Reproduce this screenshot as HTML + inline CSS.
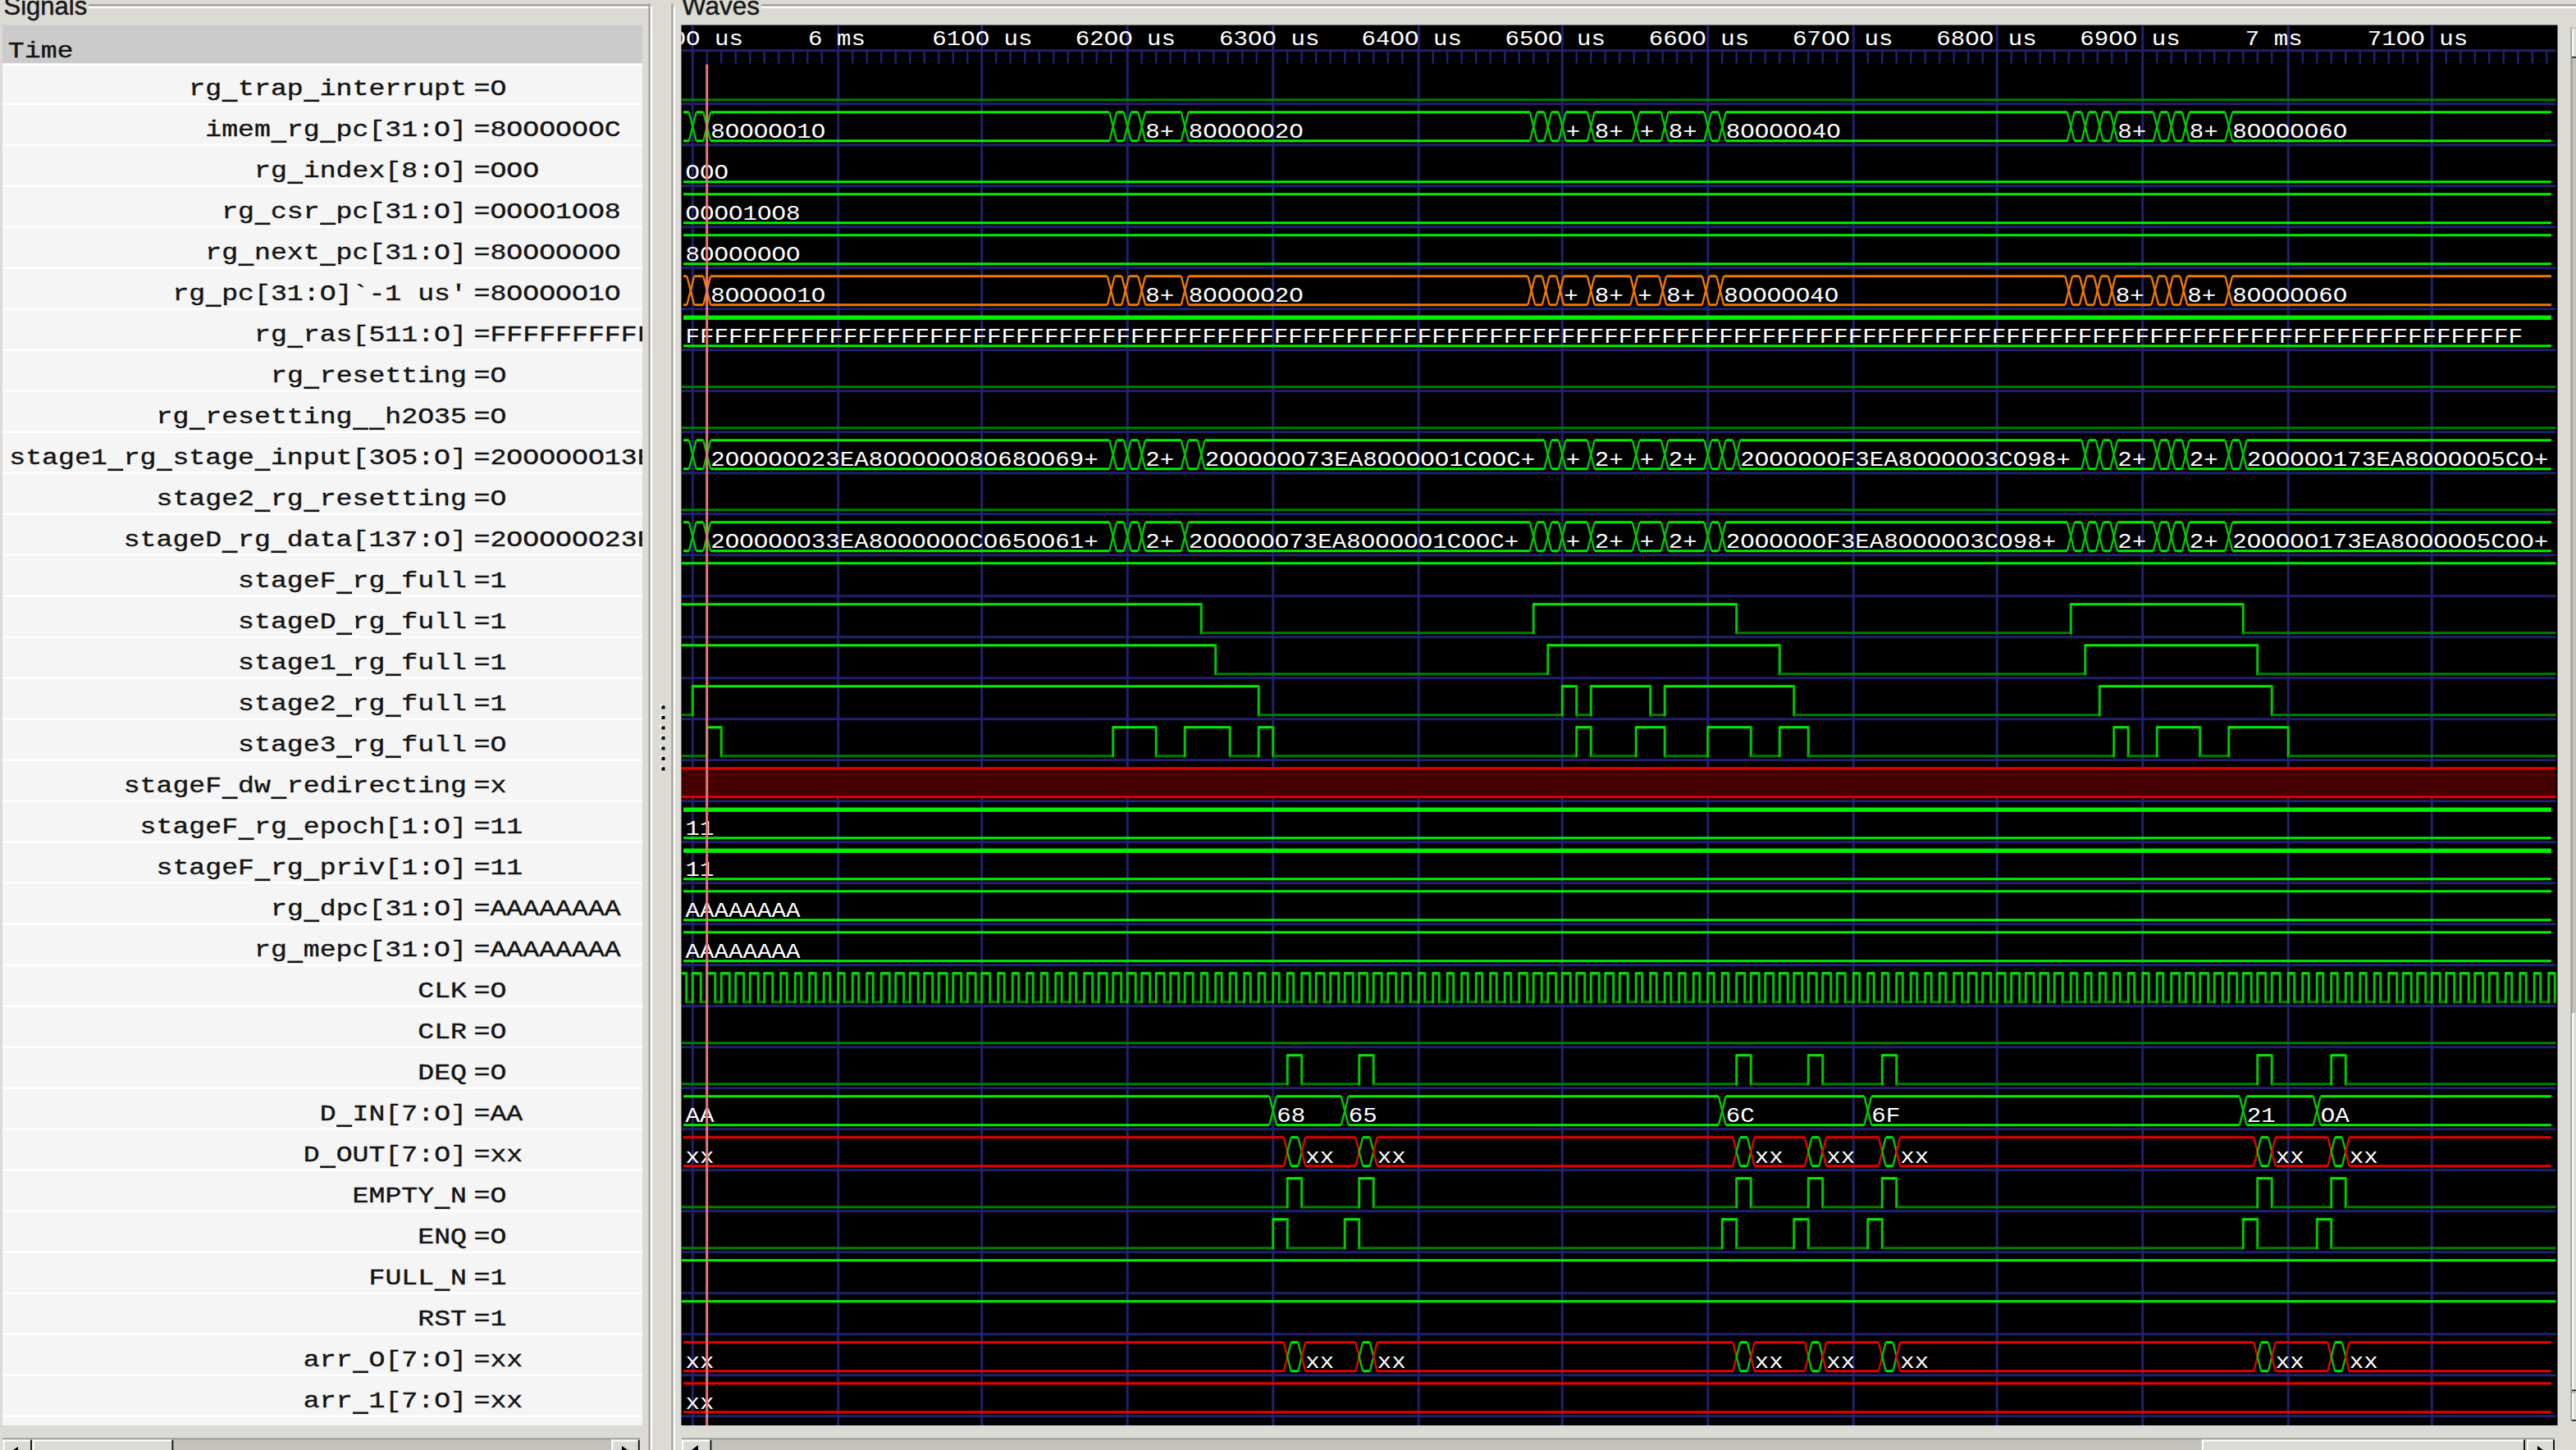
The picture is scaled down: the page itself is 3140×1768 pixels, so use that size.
<!DOCTYPE html>
<html><head><meta charset="utf-8"><title>GTKWave</title>
<style>html,body{margin:0;padding:0;background:#dcdad5;overflow:hidden}svg{display:block}</style>
</head><body>
<svg width="3140" height="1768" viewBox="0 0 3140 1768">
<rect x="0" y="0" width="3140" height="1768" fill="#dcdad5"/>
<rect x="108" y="5.2" width="684.5" height="2" fill="#9c9a93"/>
<rect x="108" y="8" width="687" height="2" fill="#ffffff"/>
<rect x="790.5" y="4.5" width="2" height="1768" fill="#9c9a93"/>
<rect x="793" y="8" width="2.2" height="1768" fill="#ffffff"/>
<rect x="928" y="5.2" width="2212" height="2" fill="#9c9a93"/>
<rect x="928" y="8" width="2212" height="2" fill="#ffffff"/>
<rect x="818.4" y="4.5" width="2" height="1768" fill="#9c9a93"/>
<rect x="820.8" y="8" width="2" height="1768" fill="#ffffff"/>
<text x="4.5" y="18" font-family="Liberation Sans, sans-serif" font-size="31" fill="#1a1a1a" stroke="#1a1a1a" stroke-width="0.5">Signals</text>
<text x="831" y="18" font-family="Liberation Sans, sans-serif" font-size="31.5" fill="#1a1a1a" stroke="#1a1a1a" stroke-width="0.5">Waves</text>
<rect x="3" y="30.3" width="780" height="1707.7" fill="#f5f5f5"/>
<rect x="3" y="30.3" width="780" height="47.1" fill="#cbcbcb"/>
<rect x="3" y="77.4" width="780" height="2.5" fill="#ffffff"/>
<rect x="3" y="125.5" width="780" height="2.5" fill="#ffffff"/>
<rect x="3" y="175.5" width="780" height="2.5" fill="#ffffff"/>
<rect x="3" y="225.5" width="780" height="2.5" fill="#ffffff"/>
<rect x="3" y="275.5" width="780" height="2.5" fill="#ffffff"/>
<rect x="3" y="325.5" width="780" height="2.5" fill="#ffffff"/>
<rect x="3" y="375.5" width="780" height="2.5" fill="#ffffff"/>
<rect x="3" y="425.5" width="780" height="2.5" fill="#ffffff"/>
<rect x="3" y="475.5" width="780" height="2.5" fill="#ffffff"/>
<rect x="3" y="525.5" width="780" height="2.5" fill="#ffffff"/>
<rect x="3" y="575.5" width="780" height="2.5" fill="#ffffff"/>
<rect x="3" y="625.5" width="780" height="2.5" fill="#ffffff"/>
<rect x="3" y="675.5" width="780" height="2.5" fill="#ffffff"/>
<rect x="3" y="725.5" width="780" height="2.5" fill="#ffffff"/>
<rect x="3" y="775.5" width="780" height="2.5" fill="#ffffff"/>
<rect x="3" y="825.5" width="780" height="2.5" fill="#ffffff"/>
<rect x="3" y="875.5" width="780" height="2.5" fill="#ffffff"/>
<rect x="3" y="925.5" width="780" height="2.5" fill="#ffffff"/>
<rect x="3" y="975.5" width="780" height="2.5" fill="#ffffff"/>
<rect x="3" y="1025.5" width="780" height="2.5" fill="#ffffff"/>
<rect x="3" y="1075.5" width="780" height="2.5" fill="#ffffff"/>
<rect x="3" y="1125.5" width="780" height="2.5" fill="#ffffff"/>
<rect x="3" y="1175.5" width="780" height="2.5" fill="#ffffff"/>
<rect x="3" y="1225.5" width="780" height="2.5" fill="#ffffff"/>
<rect x="3" y="1275.5" width="780" height="2.5" fill="#ffffff"/>
<rect x="3" y="1325.5" width="780" height="2.5" fill="#ffffff"/>
<rect x="3" y="1375.5" width="780" height="2.5" fill="#ffffff"/>
<rect x="3" y="1425.5" width="780" height="2.5" fill="#ffffff"/>
<rect x="3" y="1475.5" width="780" height="2.5" fill="#ffffff"/>
<rect x="3" y="1525.5" width="780" height="2.5" fill="#ffffff"/>
<rect x="3" y="1575.5" width="780" height="2.5" fill="#ffffff"/>
<rect x="3" y="1625.5" width="780" height="2.5" fill="#ffffff"/>
<rect x="3" y="1675.5" width="780" height="2.5" fill="#ffffff"/>
<rect x="3" y="1725.5" width="780" height="2.5" fill="#ffffff"/>
<defs><clipPath id="lc"><rect x="3" y="30" width="780" height="1708"/></clipPath><clipPath id="wc"><rect x="830.5" y="30.5" width="2287" height="1707.5"/></clipPath></defs>
<g clip-path="url(#lc)" font-family="Liberation Mono, monospace" fill="#141414" stroke="#141414" stroke-width="0.45">
<text transform="translate(9.8,70) scale(1,0.86)" font-size="33.2">Time</text>
<text transform="translate(230.36,115.5) scale(1,0.86)" font-size="33.2" xml:space="preserve">rg trap interrupt</text>
<rect x="270.70" y="121.5" width="18.92" height="2.6" stroke="none"/>
<rect x="370.30" y="121.5" width="18.92" height="2.6" stroke="none"/>
<text transform="translate(577.5,115.5) scale(1,0.86)" font-size="33.2">=O</text>
<text transform="translate(250.28,165.5) scale(1,0.86)" font-size="33.2" xml:space="preserve">imem rg pc[31:O]</text>
<rect x="330.46" y="171.5" width="18.92" height="2.6" stroke="none"/>
<rect x="390.22" y="171.5" width="18.92" height="2.6" stroke="none"/>
<text transform="translate(577.5,165.5) scale(1,0.86)" font-size="33.2">=8OOOOOOC</text>
<text transform="translate(310.04,215.5) scale(1,0.86)" font-size="33.2" xml:space="preserve">rg index[8:O]</text>
<rect x="350.38" y="221.5" width="18.92" height="2.6" stroke="none"/>
<text transform="translate(577.5,215.5) scale(1,0.86)" font-size="33.2">=OOO</text>
<text transform="translate(270.20,265.5) scale(1,0.86)" font-size="33.2" xml:space="preserve">rg csr pc[31:O]</text>
<rect x="310.54" y="271.5" width="18.92" height="2.6" stroke="none"/>
<rect x="390.22" y="271.5" width="18.92" height="2.6" stroke="none"/>
<text transform="translate(577.5,265.5) scale(1,0.86)" font-size="33.2">=OOOO1OO8</text>
<text transform="translate(250.28,315.5) scale(1,0.86)" font-size="33.2" xml:space="preserve">rg next pc[31:O]</text>
<rect x="290.62" y="321.5" width="18.92" height="2.6" stroke="none"/>
<rect x="390.22" y="321.5" width="18.92" height="2.6" stroke="none"/>
<text transform="translate(577.5,315.5) scale(1,0.86)" font-size="33.2">=8OOOOOOO</text>
<text transform="translate(210.44,365.5) scale(1,0.86)" font-size="33.2" xml:space="preserve">rg pc[31:O]`-1 us&#x27;</text>
<rect x="250.78" y="371.5" width="18.92" height="2.6" stroke="none"/>
<text transform="translate(577.5,365.5) scale(1,0.86)" font-size="33.2">=8OOOOO1O</text>
<text transform="translate(310.04,415.5) scale(1,0.86)" font-size="33.2" xml:space="preserve">rg ras[511:O]</text>
<rect x="350.38" y="421.5" width="18.92" height="2.6" stroke="none"/>
<text transform="translate(577.5,415.5) scale(1,0.86)" font-size="33.2">=FFFFFFFFFFFF</text>
<text transform="translate(329.96,465.5) scale(1,0.86)" font-size="33.2" xml:space="preserve">rg resetting</text>
<rect x="370.30" y="471.5" width="18.92" height="2.6" stroke="none"/>
<text transform="translate(577.5,465.5) scale(1,0.86)" font-size="33.2">=O</text>
<text transform="translate(190.52,515.5) scale(1,0.86)" font-size="33.2" xml:space="preserve">rg resetting  h2O35</text>
<rect x="230.86" y="521.5" width="18.92" height="2.6" stroke="none"/>
<rect x="430.06" y="521.5" width="18.92" height="2.6" stroke="none"/>
<rect x="449.98" y="521.5" width="18.92" height="2.6" stroke="none"/>
<text transform="translate(577.5,515.5) scale(1,0.86)" font-size="33.2">=O</text>
<text transform="translate(11.24,565.5) scale(1,0.86)" font-size="33.2" xml:space="preserve">stage1 rg stage input[3O5:O]</text>
<rect x="131.26" y="571.5" width="18.92" height="2.6" stroke="none"/>
<rect x="191.02" y="571.5" width="18.92" height="2.6" stroke="none"/>
<rect x="310.54" y="571.5" width="18.92" height="2.6" stroke="none"/>
<text transform="translate(577.5,565.5) scale(1,0.86)" font-size="33.2">=2OOOOOO13EA8</text>
<text transform="translate(190.52,615.5) scale(1,0.86)" font-size="33.2" xml:space="preserve">stage2 rg resetting</text>
<rect x="310.54" y="621.5" width="18.92" height="2.6" stroke="none"/>
<rect x="370.30" y="621.5" width="18.92" height="2.6" stroke="none"/>
<text transform="translate(577.5,615.5) scale(1,0.86)" font-size="33.2">=O</text>
<text transform="translate(150.68,665.5) scale(1,0.86)" font-size="33.2" xml:space="preserve">stageD rg data[137:O]</text>
<rect x="270.70" y="671.5" width="18.92" height="2.6" stroke="none"/>
<rect x="330.46" y="671.5" width="18.92" height="2.6" stroke="none"/>
<text transform="translate(577.5,665.5) scale(1,0.86)" font-size="33.2">=2OOOOOO23EA8</text>
<text transform="translate(290.12,715.5) scale(1,0.86)" font-size="33.2" xml:space="preserve">stageF rg full</text>
<rect x="410.14" y="721.5" width="18.92" height="2.6" stroke="none"/>
<rect x="469.90" y="721.5" width="18.92" height="2.6" stroke="none"/>
<text transform="translate(577.5,715.5) scale(1,0.86)" font-size="33.2">=1</text>
<text transform="translate(290.12,765.5) scale(1,0.86)" font-size="33.2" xml:space="preserve">stageD rg full</text>
<rect x="410.14" y="771.5" width="18.92" height="2.6" stroke="none"/>
<rect x="469.90" y="771.5" width="18.92" height="2.6" stroke="none"/>
<text transform="translate(577.5,765.5) scale(1,0.86)" font-size="33.2">=1</text>
<text transform="translate(290.12,815.5) scale(1,0.86)" font-size="33.2" xml:space="preserve">stage1 rg full</text>
<rect x="410.14" y="821.5" width="18.92" height="2.6" stroke="none"/>
<rect x="469.90" y="821.5" width="18.92" height="2.6" stroke="none"/>
<text transform="translate(577.5,815.5) scale(1,0.86)" font-size="33.2">=1</text>
<text transform="translate(290.12,865.5) scale(1,0.86)" font-size="33.2" xml:space="preserve">stage2 rg full</text>
<rect x="410.14" y="871.5" width="18.92" height="2.6" stroke="none"/>
<rect x="469.90" y="871.5" width="18.92" height="2.6" stroke="none"/>
<text transform="translate(577.5,865.5) scale(1,0.86)" font-size="33.2">=1</text>
<text transform="translate(290.12,915.5) scale(1,0.86)" font-size="33.2" xml:space="preserve">stage3 rg full</text>
<rect x="410.14" y="921.5" width="18.92" height="2.6" stroke="none"/>
<rect x="469.90" y="921.5" width="18.92" height="2.6" stroke="none"/>
<text transform="translate(577.5,915.5) scale(1,0.86)" font-size="33.2">=O</text>
<text transform="translate(150.68,965.5) scale(1,0.86)" font-size="33.2" xml:space="preserve">stageF dw redirecting</text>
<rect x="270.70" y="971.5" width="18.92" height="2.6" stroke="none"/>
<rect x="330.46" y="971.5" width="18.92" height="2.6" stroke="none"/>
<text transform="translate(577.5,965.5) scale(1,0.86)" font-size="33.2">=x</text>
<text transform="translate(170.60,1015.5) scale(1,0.86)" font-size="33.2" xml:space="preserve">stageF rg epoch[1:O]</text>
<rect x="290.62" y="1021.5" width="18.92" height="2.6" stroke="none"/>
<rect x="350.38" y="1021.5" width="18.92" height="2.6" stroke="none"/>
<text transform="translate(577.5,1015.5) scale(1,0.86)" font-size="33.2">=11</text>
<text transform="translate(190.52,1065.5) scale(1,0.86)" font-size="33.2" xml:space="preserve">stageF rg priv[1:O]</text>
<rect x="310.54" y="1071.5" width="18.92" height="2.6" stroke="none"/>
<rect x="370.30" y="1071.5" width="18.92" height="2.6" stroke="none"/>
<text transform="translate(577.5,1065.5) scale(1,0.86)" font-size="33.2">=11</text>
<text transform="translate(329.96,1115.5) scale(1,0.86)" font-size="33.2" xml:space="preserve">rg dpc[31:O]</text>
<rect x="370.30" y="1121.5" width="18.92" height="2.6" stroke="none"/>
<text transform="translate(577.5,1115.5) scale(1,0.86)" font-size="33.2">=AAAAAAAA</text>
<text transform="translate(310.04,1165.5) scale(1,0.86)" font-size="33.2" xml:space="preserve">rg mepc[31:O]</text>
<rect x="350.38" y="1171.5" width="18.92" height="2.6" stroke="none"/>
<text transform="translate(577.5,1165.5) scale(1,0.86)" font-size="33.2">=AAAAAAAA</text>
<text transform="translate(509.24,1215.5) scale(1,0.86)" font-size="33.2" xml:space="preserve">CLK</text>
<text transform="translate(577.5,1215.5) scale(1,0.86)" font-size="33.2">=O</text>
<text transform="translate(509.24,1265.5) scale(1,0.86)" font-size="33.2" xml:space="preserve">CLR</text>
<text transform="translate(577.5,1265.5) scale(1,0.86)" font-size="33.2">=O</text>
<text transform="translate(509.24,1315.5) scale(1,0.86)" font-size="33.2" xml:space="preserve">DEQ</text>
<text transform="translate(577.5,1315.5) scale(1,0.86)" font-size="33.2">=O</text>
<text transform="translate(389.72,1365.5) scale(1,0.86)" font-size="33.2" xml:space="preserve">D IN[7:O]</text>
<rect x="410.14" y="1371.5" width="18.92" height="2.6" stroke="none"/>
<text transform="translate(577.5,1365.5) scale(1,0.86)" font-size="33.2">=AA</text>
<text transform="translate(369.80,1415.5) scale(1,0.86)" font-size="33.2" xml:space="preserve">D OUT[7:O]</text>
<rect x="390.22" y="1421.5" width="18.92" height="2.6" stroke="none"/>
<text transform="translate(577.5,1415.5) scale(1,0.86)" font-size="33.2">=xx</text>
<text transform="translate(429.56,1465.5) scale(1,0.86)" font-size="33.2" xml:space="preserve">EMPTY N</text>
<rect x="529.66" y="1471.5" width="18.92" height="2.6" stroke="none"/>
<text transform="translate(577.5,1465.5) scale(1,0.86)" font-size="33.2">=O</text>
<text transform="translate(509.24,1515.5) scale(1,0.86)" font-size="33.2" xml:space="preserve">ENQ</text>
<text transform="translate(577.5,1515.5) scale(1,0.86)" font-size="33.2">=O</text>
<text transform="translate(449.48,1565.5) scale(1,0.86)" font-size="33.2" xml:space="preserve">FULL N</text>
<rect x="529.66" y="1571.5" width="18.92" height="2.6" stroke="none"/>
<text transform="translate(577.5,1565.5) scale(1,0.86)" font-size="33.2">=1</text>
<text transform="translate(509.24,1615.5) scale(1,0.86)" font-size="33.2" xml:space="preserve">RST</text>
<text transform="translate(577.5,1615.5) scale(1,0.86)" font-size="33.2">=1</text>
<text transform="translate(369.80,1665.5) scale(1,0.86)" font-size="33.2" xml:space="preserve">arr O[7:O]</text>
<rect x="430.06" y="1671.5" width="18.92" height="2.6" stroke="none"/>
<text transform="translate(577.5,1665.5) scale(1,0.86)" font-size="33.2">=xx</text>
<text transform="translate(369.80,1715.5) scale(1,0.86)" font-size="33.2" xml:space="preserve">arr 1[7:O]</text>
<rect x="430.06" y="1721.5" width="18.92" height="2.6" stroke="none"/>
<text transform="translate(577.5,1715.5) scale(1,0.86)" font-size="33.2">=xx</text>
</g>
<rect x="804.5" y="859.0" width="3" height="3" fill="#ffffff"/>
<rect x="806.5" y="860.5" width="4" height="4" fill="#000000"/>
<rect x="804.5" y="871.5" width="3" height="3" fill="#ffffff"/>
<rect x="806.5" y="873.0" width="4" height="4" fill="#000000"/>
<rect x="804.5" y="884.0" width="3" height="3" fill="#ffffff"/>
<rect x="806.5" y="885.5" width="4" height="4" fill="#000000"/>
<rect x="804.5" y="896.5" width="3" height="3" fill="#ffffff"/>
<rect x="806.5" y="898.0" width="4" height="4" fill="#000000"/>
<rect x="804.5" y="909.0" width="3" height="3" fill="#ffffff"/>
<rect x="806.5" y="910.5" width="4" height="4" fill="#000000"/>
<rect x="804.5" y="921.5" width="3" height="3" fill="#ffffff"/>
<rect x="806.5" y="923.0" width="4" height="4" fill="#000000"/>
<rect x="804.5" y="934.0" width="3" height="3" fill="#ffffff"/>
<rect x="806.5" y="935.5" width="4" height="4" fill="#000000"/>
<rect x="3" y="1753.5" width="777" height="14.5" fill="#c4c2bd"/>
<rect x="3" y="1753.5" width="777" height="2" fill="#9c9a93"/>
<rect x="3.5" y="1755.5" width="35.5" height="12.5" fill="#dcdad5"/>
<rect x="3.5" y="1755.5" width="35.5" height="2" fill="#ffffff"/>
<rect x="3.5" y="1755.5" width="2" height="12.5" fill="#ffffff"/>
<rect x="37" y="1755.5" width="2" height="12.5" fill="#1a1a1a"/>
<rect x="39.6" y="1755.5" width="171.8" height="12.5" fill="#dcdad5"/>
<rect x="39.6" y="1755.5" width="171.8" height="2" fill="#ffffff"/>
<rect x="39.6" y="1755.5" width="2" height="12.5" fill="#ffffff"/>
<rect x="209.4" y="1755.5" width="2" height="12.5" fill="#1a1a1a"/>
<rect x="745.3" y="1755.5" width="34.5" height="12.5" fill="#dcdad5"/>
<rect x="745.3" y="1755.5" width="34.5" height="2" fill="#ffffff"/>
<rect x="745.3" y="1755.5" width="2" height="12.5" fill="#ffffff"/>
<rect x="777.8" y="1755.5" width="2" height="12.5" fill="#1a1a1a"/>
<path d="M 22 1764 L 16 1768 L 22 1768 Z" fill="#000"/>
<path d="M 758 1763 L 765 1768 L 758 1768 Z" fill="#000"/>
<rect x="831" y="1753.5" width="2283" height="14.5" fill="#c4c2bd"/>
<rect x="831" y="1753.5" width="2283" height="2" fill="#9c9a93"/>
<rect x="831" y="1755.5" width="36.5" height="12.5" fill="#dcdad5"/>
<rect x="831" y="1755.5" width="36.5" height="2" fill="#ffffff"/>
<rect x="831" y="1755.5" width="2" height="12.5" fill="#ffffff"/>
<rect x="865.5" y="1755.5" width="2" height="12.5" fill="#1a1a1a"/>
<rect x="2683.9" y="1755.5" width="394.0999999999999" height="12.5" fill="#dcdad5"/>
<rect x="2683.9" y="1755.5" width="394.0999999999999" height="2" fill="#ffffff"/>
<rect x="2683.9" y="1755.5" width="2" height="12.5" fill="#ffffff"/>
<rect x="3076" y="1755.5" width="2" height="12.5" fill="#1a1a1a"/>
<rect x="3080" y="1755.5" width="34" height="12.5" fill="#dcdad5"/>
<rect x="3080" y="1755.5" width="34" height="2" fill="#ffffff"/>
<rect x="3080" y="1755.5" width="2" height="12.5" fill="#ffffff"/>
<rect x="3112" y="1755.5" width="2" height="12.5" fill="#1a1a1a"/>
<path d="M 851 1762 L 843 1768 L 851 1768 Z" fill="#000"/>
<path d="M 3093 1763 L 3100 1768 L 3093 1768 Z" fill="#000"/>
<rect x="3133.5" y="33.5" width="7" height="1699" fill="#c4c2bd"/>
<rect x="3133.5" y="33.5" width="2" height="1699" fill="#9c9a93"/>
<rect x="3135.3" y="35" width="5" height="34" fill="#dcdad5"/>
<rect x="3135.3" y="35" width="2" height="34" fill="#ffffff"/>
<rect x="3135" y="69" width="5" height="1.6" fill="#1a1a1a"/>
<rect x="3135.3" y="1235" width="5" height="460" fill="#dcdad5"/>
<rect x="3135.3" y="1235" width="2" height="460" fill="#ffffff"/>
<rect x="3135" y="1694.5" width="5" height="1.6" fill="#1a1a1a"/>
<rect x="3135.3" y="1699" width="5" height="33" fill="#dcdad5"/>
<rect x="3135.3" y="1699" width="2" height="33" fill="#ffffff"/>
<rect x="3135" y="1731" width="5" height="1.6" fill="#1a1a1a"/>
<rect x="830.5" y="30.5" width="2287" height="1707.5" fill="#000000"/>
<g clip-path="url(#wc)">
<rect x="842.75" y="30.5" width="3" height="1707.5" fill="#202070"/>
<rect x="1020.25" y="30.5" width="3" height="1707.5" fill="#202070"/>
<rect x="1195.25" y="30.5" width="3" height="1707.5" fill="#202070"/>
<rect x="1372.75" y="30.5" width="3" height="1707.5" fill="#202070"/>
<rect x="1550.25" y="30.5" width="3" height="1707.5" fill="#202070"/>
<rect x="1727.75" y="30.5" width="3" height="1707.5" fill="#202070"/>
<rect x="1902.75" y="30.5" width="3" height="1707.5" fill="#202070"/>
<rect x="2080.25" y="30.5" width="3" height="1707.5" fill="#202070"/>
<rect x="2257.75" y="30.5" width="3" height="1707.5" fill="#202070"/>
<rect x="2432.75" y="30.5" width="3" height="1707.5" fill="#202070"/>
<rect x="2610.25" y="30.5" width="3" height="1707.5" fill="#202070"/>
<rect x="2787.75" y="30.5" width="3" height="1707.5" fill="#202070"/>
<rect x="2962.75" y="30.5" width="3" height="1707.5" fill="#202070"/>
<rect x="831.0" y="60.2" width="2284.5" height="3" fill="#202070"/>
<rect x="860.50" y="62.5" width="2.5" height="15" fill="#202070"/>
<rect x="878.00" y="62.5" width="2.5" height="15" fill="#202070"/>
<rect x="895.50" y="62.5" width="2.5" height="15" fill="#202070"/>
<rect x="913.00" y="62.5" width="2.5" height="15" fill="#202070"/>
<rect x="930.50" y="62.5" width="2.5" height="15" fill="#202070"/>
<rect x="948.00" y="62.5" width="2.5" height="15" fill="#202070"/>
<rect x="965.50" y="62.5" width="2.5" height="15" fill="#202070"/>
<rect x="983.00" y="62.5" width="2.5" height="15" fill="#202070"/>
<rect x="1000.50" y="62.5" width="2.5" height="15" fill="#202070"/>
<rect x="1038.00" y="62.5" width="2.5" height="15" fill="#202070"/>
<rect x="1055.50" y="62.5" width="2.5" height="15" fill="#202070"/>
<rect x="1073.00" y="62.5" width="2.5" height="15" fill="#202070"/>
<rect x="1090.50" y="62.5" width="2.5" height="15" fill="#202070"/>
<rect x="1108.00" y="62.5" width="2.5" height="15" fill="#202070"/>
<rect x="1125.50" y="62.5" width="2.5" height="15" fill="#202070"/>
<rect x="1143.00" y="62.5" width="2.5" height="15" fill="#202070"/>
<rect x="1160.50" y="62.5" width="2.5" height="15" fill="#202070"/>
<rect x="1178.00" y="62.5" width="2.5" height="15" fill="#202070"/>
<rect x="1213.00" y="62.5" width="2.5" height="15" fill="#202070"/>
<rect x="1230.50" y="62.5" width="2.5" height="15" fill="#202070"/>
<rect x="1248.00" y="62.5" width="2.5" height="15" fill="#202070"/>
<rect x="1265.50" y="62.5" width="2.5" height="15" fill="#202070"/>
<rect x="1283.00" y="62.5" width="2.5" height="15" fill="#202070"/>
<rect x="1300.50" y="62.5" width="2.5" height="15" fill="#202070"/>
<rect x="1318.00" y="62.5" width="2.5" height="15" fill="#202070"/>
<rect x="1335.50" y="62.5" width="2.5" height="15" fill="#202070"/>
<rect x="1353.00" y="62.5" width="2.5" height="15" fill="#202070"/>
<rect x="1390.50" y="62.5" width="2.5" height="15" fill="#202070"/>
<rect x="1408.00" y="62.5" width="2.5" height="15" fill="#202070"/>
<rect x="1425.50" y="62.5" width="2.5" height="15" fill="#202070"/>
<rect x="1443.00" y="62.5" width="2.5" height="15" fill="#202070"/>
<rect x="1460.50" y="62.5" width="2.5" height="15" fill="#202070"/>
<rect x="1478.00" y="62.5" width="2.5" height="15" fill="#202070"/>
<rect x="1495.50" y="62.5" width="2.5" height="15" fill="#202070"/>
<rect x="1513.00" y="62.5" width="2.5" height="15" fill="#202070"/>
<rect x="1530.50" y="62.5" width="2.5" height="15" fill="#202070"/>
<rect x="1568.00" y="62.5" width="2.5" height="15" fill="#202070"/>
<rect x="1585.50" y="62.5" width="2.5" height="15" fill="#202070"/>
<rect x="1603.00" y="62.5" width="2.5" height="15" fill="#202070"/>
<rect x="1620.50" y="62.5" width="2.5" height="15" fill="#202070"/>
<rect x="1638.00" y="62.5" width="2.5" height="15" fill="#202070"/>
<rect x="1655.50" y="62.5" width="2.5" height="15" fill="#202070"/>
<rect x="1673.00" y="62.5" width="2.5" height="15" fill="#202070"/>
<rect x="1690.50" y="62.5" width="2.5" height="15" fill="#202070"/>
<rect x="1708.00" y="62.5" width="2.5" height="15" fill="#202070"/>
<rect x="1745.50" y="62.5" width="2.5" height="15" fill="#202070"/>
<rect x="1763.00" y="62.5" width="2.5" height="15" fill="#202070"/>
<rect x="1780.50" y="62.5" width="2.5" height="15" fill="#202070"/>
<rect x="1798.00" y="62.5" width="2.5" height="15" fill="#202070"/>
<rect x="1815.50" y="62.5" width="2.5" height="15" fill="#202070"/>
<rect x="1833.00" y="62.5" width="2.5" height="15" fill="#202070"/>
<rect x="1850.50" y="62.5" width="2.5" height="15" fill="#202070"/>
<rect x="1868.00" y="62.5" width="2.5" height="15" fill="#202070"/>
<rect x="1885.50" y="62.5" width="2.5" height="15" fill="#202070"/>
<rect x="1920.50" y="62.5" width="2.5" height="15" fill="#202070"/>
<rect x="1938.00" y="62.5" width="2.5" height="15" fill="#202070"/>
<rect x="1955.50" y="62.5" width="2.5" height="15" fill="#202070"/>
<rect x="1973.00" y="62.5" width="2.5" height="15" fill="#202070"/>
<rect x="1990.50" y="62.5" width="2.5" height="15" fill="#202070"/>
<rect x="2008.00" y="62.5" width="2.5" height="15" fill="#202070"/>
<rect x="2025.50" y="62.5" width="2.5" height="15" fill="#202070"/>
<rect x="2043.00" y="62.5" width="2.5" height="15" fill="#202070"/>
<rect x="2060.50" y="62.5" width="2.5" height="15" fill="#202070"/>
<rect x="2098.00" y="62.5" width="2.5" height="15" fill="#202070"/>
<rect x="2115.50" y="62.5" width="2.5" height="15" fill="#202070"/>
<rect x="2133.00" y="62.5" width="2.5" height="15" fill="#202070"/>
<rect x="2150.50" y="62.5" width="2.5" height="15" fill="#202070"/>
<rect x="2168.00" y="62.5" width="2.5" height="15" fill="#202070"/>
<rect x="2185.50" y="62.5" width="2.5" height="15" fill="#202070"/>
<rect x="2203.00" y="62.5" width="2.5" height="15" fill="#202070"/>
<rect x="2220.50" y="62.5" width="2.5" height="15" fill="#202070"/>
<rect x="2238.00" y="62.5" width="2.5" height="15" fill="#202070"/>
<rect x="2275.50" y="62.5" width="2.5" height="15" fill="#202070"/>
<rect x="2293.00" y="62.5" width="2.5" height="15" fill="#202070"/>
<rect x="2310.50" y="62.5" width="2.5" height="15" fill="#202070"/>
<rect x="2328.00" y="62.5" width="2.5" height="15" fill="#202070"/>
<rect x="2345.50" y="62.5" width="2.5" height="15" fill="#202070"/>
<rect x="2363.00" y="62.5" width="2.5" height="15" fill="#202070"/>
<rect x="2380.50" y="62.5" width="2.5" height="15" fill="#202070"/>
<rect x="2398.00" y="62.5" width="2.5" height="15" fill="#202070"/>
<rect x="2415.50" y="62.5" width="2.5" height="15" fill="#202070"/>
<rect x="2450.50" y="62.5" width="2.5" height="15" fill="#202070"/>
<rect x="2468.00" y="62.5" width="2.5" height="15" fill="#202070"/>
<rect x="2485.50" y="62.5" width="2.5" height="15" fill="#202070"/>
<rect x="2503.00" y="62.5" width="2.5" height="15" fill="#202070"/>
<rect x="2520.50" y="62.5" width="2.5" height="15" fill="#202070"/>
<rect x="2538.00" y="62.5" width="2.5" height="15" fill="#202070"/>
<rect x="2555.50" y="62.5" width="2.5" height="15" fill="#202070"/>
<rect x="2573.00" y="62.5" width="2.5" height="15" fill="#202070"/>
<rect x="2590.50" y="62.5" width="2.5" height="15" fill="#202070"/>
<rect x="2628.00" y="62.5" width="2.5" height="15" fill="#202070"/>
<rect x="2645.50" y="62.5" width="2.5" height="15" fill="#202070"/>
<rect x="2663.00" y="62.5" width="2.5" height="15" fill="#202070"/>
<rect x="2680.50" y="62.5" width="2.5" height="15" fill="#202070"/>
<rect x="2698.00" y="62.5" width="2.5" height="15" fill="#202070"/>
<rect x="2715.50" y="62.5" width="2.5" height="15" fill="#202070"/>
<rect x="2733.00" y="62.5" width="2.5" height="15" fill="#202070"/>
<rect x="2750.50" y="62.5" width="2.5" height="15" fill="#202070"/>
<rect x="2768.00" y="62.5" width="2.5" height="15" fill="#202070"/>
<rect x="2805.50" y="62.5" width="2.5" height="15" fill="#202070"/>
<rect x="2823.00" y="62.5" width="2.5" height="15" fill="#202070"/>
<rect x="2840.50" y="62.5" width="2.5" height="15" fill="#202070"/>
<rect x="2858.00" y="62.5" width="2.5" height="15" fill="#202070"/>
<rect x="2875.50" y="62.5" width="2.5" height="15" fill="#202070"/>
<rect x="2893.00" y="62.5" width="2.5" height="15" fill="#202070"/>
<rect x="2910.50" y="62.5" width="2.5" height="15" fill="#202070"/>
<rect x="2928.00" y="62.5" width="2.5" height="15" fill="#202070"/>
<rect x="2945.50" y="62.5" width="2.5" height="15" fill="#202070"/>
<rect x="2980.50" y="62.5" width="2.5" height="15" fill="#202070"/>
<rect x="2998.00" y="62.5" width="2.5" height="15" fill="#202070"/>
<rect x="3015.50" y="62.5" width="2.5" height="15" fill="#202070"/>
<rect x="3033.00" y="62.5" width="2.5" height="15" fill="#202070"/>
<rect x="3050.50" y="62.5" width="2.5" height="15" fill="#202070"/>
<rect x="3068.00" y="62.5" width="2.5" height="15" fill="#202070"/>
<rect x="3085.50" y="62.5" width="2.5" height="15" fill="#202070"/>
<rect x="3103.00" y="62.5" width="2.5" height="15" fill="#202070"/>
<text transform="translate(783.54,55) scale(1,0.885)" font-family="Liberation Mono, monospace" font-size="29.17" fill="#ffffff" xml:space="preserve">59OO us</text>
<text transform="translate(984.98,55) scale(1,0.885)" font-family="Liberation Mono, monospace" font-size="29.17" fill="#ffffff" xml:space="preserve">6 ms</text>
<text transform="translate(1136.14,55) scale(1,0.885)" font-family="Liberation Mono, monospace" font-size="29.17" fill="#ffffff" xml:space="preserve">61OO us</text>
<text transform="translate(1310.64,55) scale(1,0.885)" font-family="Liberation Mono, monospace" font-size="29.17" fill="#ffffff" xml:space="preserve">62OO us</text>
<text transform="translate(1485.94,55) scale(1,0.885)" font-family="Liberation Mono, monospace" font-size="29.17" fill="#ffffff" xml:space="preserve">63OO us</text>
<text transform="translate(1659.44,55) scale(1,0.885)" font-family="Liberation Mono, monospace" font-size="29.17" fill="#ffffff" xml:space="preserve">64OO us</text>
<text transform="translate(1834.62,55) scale(1,0.885)" font-family="Liberation Mono, monospace" font-size="29.17" fill="#ffffff" xml:space="preserve">65OO us</text>
<text transform="translate(2009.80,55) scale(1,0.885)" font-family="Liberation Mono, monospace" font-size="29.17" fill="#ffffff" xml:space="preserve">66OO us</text>
<text transform="translate(2184.98,55) scale(1,0.885)" font-family="Liberation Mono, monospace" font-size="29.17" fill="#ffffff" xml:space="preserve">67OO us</text>
<text transform="translate(2360.16,55) scale(1,0.885)" font-family="Liberation Mono, monospace" font-size="29.17" fill="#ffffff" xml:space="preserve">68OO us</text>
<text transform="translate(2535.34,55) scale(1,0.885)" font-family="Liberation Mono, monospace" font-size="29.17" fill="#ffffff" xml:space="preserve">69OO us</text>
<text transform="translate(2736.78,55) scale(1,0.885)" font-family="Liberation Mono, monospace" font-size="29.17" fill="#ffffff" xml:space="preserve">7 ms</text>
<text transform="translate(2885.70,55) scale(1,0.885)" font-family="Liberation Mono, monospace" font-size="29.17" fill="#ffffff" xml:space="preserve">71OO us</text>
<rect x="831.0" y="125.25" width="2284.5" height="3" fill="#202070"/>
<rect x="831.0" y="175.25" width="2284.5" height="3" fill="#202070"/>
<rect x="831.0" y="225.25" width="2284.5" height="3" fill="#202070"/>
<rect x="831.0" y="275.25" width="2284.5" height="3" fill="#202070"/>
<rect x="831.0" y="325.25" width="2284.5" height="3" fill="#202070"/>
<rect x="831.0" y="375.25" width="2284.5" height="3" fill="#202070"/>
<rect x="831.0" y="425.25" width="2284.5" height="3" fill="#202070"/>
<rect x="831.0" y="475.25" width="2284.5" height="3" fill="#202070"/>
<rect x="831.0" y="525.25" width="2284.5" height="3" fill="#202070"/>
<rect x="831.0" y="575.25" width="2284.5" height="3" fill="#202070"/>
<rect x="831.0" y="625.25" width="2284.5" height="3" fill="#202070"/>
<rect x="831.0" y="675.25" width="2284.5" height="3" fill="#202070"/>
<rect x="831.0" y="725.25" width="2284.5" height="3" fill="#202070"/>
<rect x="831.0" y="775.25" width="2284.5" height="3" fill="#202070"/>
<rect x="831.0" y="825.25" width="2284.5" height="3" fill="#202070"/>
<rect x="831.0" y="875.25" width="2284.5" height="3" fill="#202070"/>
<rect x="831.0" y="925.25" width="2284.5" height="3" fill="#202070"/>
<rect x="831.0" y="975.25" width="2284.5" height="3" fill="#202070"/>
<rect x="831.0" y="1025.25" width="2284.5" height="3" fill="#202070"/>
<rect x="831.0" y="1075.25" width="2284.5" height="3" fill="#202070"/>
<rect x="831.0" y="1125.25" width="2284.5" height="3" fill="#202070"/>
<rect x="831.0" y="1175.25" width="2284.5" height="3" fill="#202070"/>
<rect x="831.0" y="1225.25" width="2284.5" height="3" fill="#202070"/>
<rect x="831.0" y="1275.25" width="2284.5" height="3" fill="#202070"/>
<rect x="831.0" y="1325.25" width="2284.5" height="3" fill="#202070"/>
<rect x="831.0" y="1375.25" width="2284.5" height="3" fill="#202070"/>
<rect x="831.0" y="1425.25" width="2284.5" height="3" fill="#202070"/>
<rect x="831.0" y="1475.25" width="2284.5" height="3" fill="#202070"/>
<rect x="831.0" y="1525.25" width="2284.5" height="3" fill="#202070"/>
<rect x="831.0" y="1575.25" width="2284.5" height="3" fill="#202070"/>
<rect x="831.0" y="1625.25" width="2284.5" height="3" fill="#202070"/>
<rect x="831.0" y="1675.25" width="2284.5" height="3" fill="#202070"/>
<rect x="831.0" y="1725.25" width="2284.5" height="3" fill="#202070"/>
<rect x="831.00" y="120.25" width="2284.50" height="3" fill="#008000"/>
<rect x="831.00" y="470.25" width="2284.50" height="3" fill="#008000"/>
<rect x="831.00" y="520.25" width="2284.50" height="3" fill="#008000"/>
<rect x="831.00" y="620.25" width="2284.50" height="3" fill="#008000"/>
<rect x="831.00" y="1270.25" width="2284.50" height="3" fill="#008000"/>
<rect x="831.00" y="685.25" width="2284.50" height="3" fill="#00f000"/>
<rect x="831.00" y="1535.25" width="2284.50" height="3" fill="#00f000"/>
<rect x="831.00" y="1585.25" width="2284.50" height="3" fill="#00f000"/>
<rect x="831.00" y="735.25" width="633.25" height="3" fill="#00f000"/>
<rect x="1462.75" y="735.25" width="3" height="38.00" fill="#00c800"/>
<rect x="1464.25" y="770.25" width="405.00" height="3" fill="#008000"/>
<rect x="1867.75" y="735.25" width="3" height="38.00" fill="#00c800"/>
<rect x="1869.25" y="735.25" width="247.50" height="3" fill="#00f000"/>
<rect x="2115.25" y="735.25" width="3" height="38.00" fill="#00c800"/>
<rect x="2116.75" y="770.25" width="407.50" height="3" fill="#008000"/>
<rect x="2522.75" y="735.25" width="3" height="38.00" fill="#00c800"/>
<rect x="2524.25" y="735.25" width="210.00" height="3" fill="#00f000"/>
<rect x="2732.75" y="735.25" width="3" height="38.00" fill="#00c800"/>
<rect x="2734.25" y="770.25" width="381.25" height="3" fill="#008000"/>
<rect x="831.00" y="785.25" width="650.75" height="3" fill="#00f000"/>
<rect x="1480.25" y="785.25" width="3" height="38.00" fill="#00c800"/>
<rect x="1481.75" y="820.25" width="405.00" height="3" fill="#008000"/>
<rect x="1885.25" y="785.25" width="3" height="38.00" fill="#00c800"/>
<rect x="1886.75" y="785.25" width="282.50" height="3" fill="#00f000"/>
<rect x="2167.75" y="785.25" width="3" height="38.00" fill="#00c800"/>
<rect x="2169.25" y="820.25" width="372.50" height="3" fill="#008000"/>
<rect x="2540.25" y="785.25" width="3" height="38.00" fill="#00c800"/>
<rect x="2541.75" y="785.25" width="210.00" height="3" fill="#00f000"/>
<rect x="2750.25" y="785.25" width="3" height="38.00" fill="#00c800"/>
<rect x="2751.75" y="820.25" width="363.75" height="3" fill="#008000"/>
<rect x="831.00" y="870.25" width="13.25" height="3" fill="#008000"/>
<rect x="842.75" y="835.25" width="3" height="38.00" fill="#00c800"/>
<rect x="844.25" y="835.25" width="690.00" height="3" fill="#00f000"/>
<rect x="1532.75" y="835.25" width="3" height="38.00" fill="#00c800"/>
<rect x="1534.25" y="870.25" width="370.00" height="3" fill="#008000"/>
<rect x="1902.75" y="835.25" width="3" height="38.00" fill="#00c800"/>
<rect x="1904.25" y="835.25" width="17.50" height="3" fill="#00f000"/>
<rect x="1920.25" y="835.25" width="3" height="38.00" fill="#00c800"/>
<rect x="1921.75" y="870.25" width="17.50" height="3" fill="#008000"/>
<rect x="1937.75" y="835.25" width="3" height="38.00" fill="#00c800"/>
<rect x="1939.25" y="835.25" width="72.50" height="3" fill="#00f000"/>
<rect x="2010.25" y="835.25" width="3" height="38.00" fill="#00c800"/>
<rect x="2011.75" y="870.25" width="17.50" height="3" fill="#008000"/>
<rect x="2027.75" y="835.25" width="3" height="38.00" fill="#00c800"/>
<rect x="2029.25" y="835.25" width="157.50" height="3" fill="#00f000"/>
<rect x="2185.25" y="835.25" width="3" height="38.00" fill="#00c800"/>
<rect x="2186.75" y="870.25" width="372.50" height="3" fill="#008000"/>
<rect x="2557.75" y="835.25" width="3" height="38.00" fill="#00c800"/>
<rect x="2559.25" y="835.25" width="210.00" height="3" fill="#00f000"/>
<rect x="2767.75" y="835.25" width="3" height="38.00" fill="#00c800"/>
<rect x="2769.25" y="870.25" width="346.25" height="3" fill="#008000"/>
<rect x="831.00" y="920.25" width="30.75" height="3" fill="#008000"/>
<rect x="860.25" y="885.25" width="3" height="38.00" fill="#00c800"/>
<rect x="861.75" y="885.25" width="17.50" height="3" fill="#00f000"/>
<rect x="877.75" y="885.25" width="3" height="38.00" fill="#00c800"/>
<rect x="879.25" y="920.25" width="477.50" height="3" fill="#008000"/>
<rect x="1355.25" y="885.25" width="3" height="38.00" fill="#00c800"/>
<rect x="1356.75" y="885.25" width="52.50" height="3" fill="#00f000"/>
<rect x="1407.75" y="885.25" width="3" height="38.00" fill="#00c800"/>
<rect x="1409.25" y="920.25" width="35.00" height="3" fill="#008000"/>
<rect x="1442.75" y="885.25" width="3" height="38.00" fill="#00c800"/>
<rect x="1444.25" y="885.25" width="55.00" height="3" fill="#00f000"/>
<rect x="1497.75" y="885.25" width="3" height="38.00" fill="#00c800"/>
<rect x="1499.25" y="920.25" width="35.00" height="3" fill="#008000"/>
<rect x="1532.75" y="885.25" width="3" height="38.00" fill="#00c800"/>
<rect x="1534.25" y="885.25" width="17.50" height="3" fill="#00f000"/>
<rect x="1550.25" y="885.25" width="3" height="38.00" fill="#00c800"/>
<rect x="1551.75" y="920.25" width="370.00" height="3" fill="#008000"/>
<rect x="1920.25" y="885.25" width="3" height="38.00" fill="#00c800"/>
<rect x="1921.75" y="885.25" width="17.50" height="3" fill="#00f000"/>
<rect x="1937.75" y="885.25" width="3" height="38.00" fill="#00c800"/>
<rect x="1939.25" y="920.25" width="55.00" height="3" fill="#008000"/>
<rect x="1992.75" y="885.25" width="3" height="38.00" fill="#00c800"/>
<rect x="1994.25" y="885.25" width="35.00" height="3" fill="#00f000"/>
<rect x="2027.75" y="885.25" width="3" height="38.00" fill="#00c800"/>
<rect x="2029.25" y="920.25" width="52.50" height="3" fill="#008000"/>
<rect x="2080.25" y="885.25" width="3" height="38.00" fill="#00c800"/>
<rect x="2081.75" y="885.25" width="52.50" height="3" fill="#00f000"/>
<rect x="2132.75" y="885.25" width="3" height="38.00" fill="#00c800"/>
<rect x="2134.25" y="920.25" width="35.00" height="3" fill="#008000"/>
<rect x="2167.75" y="885.25" width="3" height="38.00" fill="#00c800"/>
<rect x="2169.25" y="885.25" width="35.00" height="3" fill="#00f000"/>
<rect x="2202.75" y="885.25" width="3" height="38.00" fill="#00c800"/>
<rect x="2204.25" y="920.25" width="372.50" height="3" fill="#008000"/>
<rect x="2575.25" y="885.25" width="3" height="38.00" fill="#00c800"/>
<rect x="2576.75" y="885.25" width="17.50" height="3" fill="#00f000"/>
<rect x="2592.75" y="885.25" width="3" height="38.00" fill="#00c800"/>
<rect x="2594.25" y="920.25" width="35.00" height="3" fill="#008000"/>
<rect x="2627.75" y="885.25" width="3" height="38.00" fill="#00c800"/>
<rect x="2629.25" y="885.25" width="52.50" height="3" fill="#00f000"/>
<rect x="2680.25" y="885.25" width="3" height="38.00" fill="#00c800"/>
<rect x="2681.75" y="920.25" width="35.00" height="3" fill="#008000"/>
<rect x="2715.25" y="885.25" width="3" height="38.00" fill="#00c800"/>
<rect x="2716.75" y="885.25" width="72.50" height="3" fill="#00f000"/>
<rect x="2787.75" y="885.25" width="3" height="38.00" fill="#00c800"/>
<rect x="2789.25" y="920.25" width="326.25" height="3" fill="#008000"/>
<rect x="831.00" y="1320.25" width="738.25" height="3" fill="#008000"/>
<rect x="1567.75" y="1285.25" width="3" height="38.00" fill="#00c800"/>
<rect x="1569.25" y="1285.25" width="17.50" height="3" fill="#00f000"/>
<rect x="1585.25" y="1285.25" width="3" height="38.00" fill="#00c800"/>
<rect x="1586.75" y="1320.25" width="70.00" height="3" fill="#008000"/>
<rect x="1655.25" y="1285.25" width="3" height="38.00" fill="#00c800"/>
<rect x="1656.75" y="1285.25" width="17.50" height="3" fill="#00f000"/>
<rect x="1672.75" y="1285.25" width="3" height="38.00" fill="#00c800"/>
<rect x="1674.25" y="1320.25" width="442.50" height="3" fill="#008000"/>
<rect x="2115.25" y="1285.25" width="3" height="38.00" fill="#00c800"/>
<rect x="2116.75" y="1285.25" width="17.50" height="3" fill="#00f000"/>
<rect x="2132.75" y="1285.25" width="3" height="38.00" fill="#00c800"/>
<rect x="2134.25" y="1320.25" width="70.00" height="3" fill="#008000"/>
<rect x="2202.75" y="1285.25" width="3" height="38.00" fill="#00c800"/>
<rect x="2204.25" y="1285.25" width="17.50" height="3" fill="#00f000"/>
<rect x="2220.25" y="1285.25" width="3" height="38.00" fill="#00c800"/>
<rect x="2221.75" y="1320.25" width="72.50" height="3" fill="#008000"/>
<rect x="2292.75" y="1285.25" width="3" height="38.00" fill="#00c800"/>
<rect x="2294.25" y="1285.25" width="17.50" height="3" fill="#00f000"/>
<rect x="2310.25" y="1285.25" width="3" height="38.00" fill="#00c800"/>
<rect x="2311.75" y="1320.25" width="440.00" height="3" fill="#008000"/>
<rect x="2750.25" y="1285.25" width="3" height="38.00" fill="#00c800"/>
<rect x="2751.75" y="1285.25" width="17.50" height="3" fill="#00f000"/>
<rect x="2767.75" y="1285.25" width="3" height="38.00" fill="#00c800"/>
<rect x="2769.25" y="1320.25" width="72.50" height="3" fill="#008000"/>
<rect x="2840.25" y="1285.25" width="3" height="38.00" fill="#00c800"/>
<rect x="2841.75" y="1285.25" width="17.50" height="3" fill="#00f000"/>
<rect x="2857.75" y="1285.25" width="3" height="38.00" fill="#00c800"/>
<rect x="2859.25" y="1320.25" width="256.25" height="3" fill="#008000"/>
<rect x="831.00" y="1470.25" width="738.25" height="3" fill="#008000"/>
<rect x="1567.75" y="1435.25" width="3" height="38.00" fill="#00c800"/>
<rect x="1569.25" y="1435.25" width="17.50" height="3" fill="#00f000"/>
<rect x="1585.25" y="1435.25" width="3" height="38.00" fill="#00c800"/>
<rect x="1586.75" y="1470.25" width="70.00" height="3" fill="#008000"/>
<rect x="1655.25" y="1435.25" width="3" height="38.00" fill="#00c800"/>
<rect x="1656.75" y="1435.25" width="17.50" height="3" fill="#00f000"/>
<rect x="1672.75" y="1435.25" width="3" height="38.00" fill="#00c800"/>
<rect x="1674.25" y="1470.25" width="442.50" height="3" fill="#008000"/>
<rect x="2115.25" y="1435.25" width="3" height="38.00" fill="#00c800"/>
<rect x="2116.75" y="1435.25" width="17.50" height="3" fill="#00f000"/>
<rect x="2132.75" y="1435.25" width="3" height="38.00" fill="#00c800"/>
<rect x="2134.25" y="1470.25" width="70.00" height="3" fill="#008000"/>
<rect x="2202.75" y="1435.25" width="3" height="38.00" fill="#00c800"/>
<rect x="2204.25" y="1435.25" width="17.50" height="3" fill="#00f000"/>
<rect x="2220.25" y="1435.25" width="3" height="38.00" fill="#00c800"/>
<rect x="2221.75" y="1470.25" width="72.50" height="3" fill="#008000"/>
<rect x="2292.75" y="1435.25" width="3" height="38.00" fill="#00c800"/>
<rect x="2294.25" y="1435.25" width="17.50" height="3" fill="#00f000"/>
<rect x="2310.25" y="1435.25" width="3" height="38.00" fill="#00c800"/>
<rect x="2311.75" y="1470.25" width="440.00" height="3" fill="#008000"/>
<rect x="2750.25" y="1435.25" width="3" height="38.00" fill="#00c800"/>
<rect x="2751.75" y="1435.25" width="17.50" height="3" fill="#00f000"/>
<rect x="2767.75" y="1435.25" width="3" height="38.00" fill="#00c800"/>
<rect x="2769.25" y="1470.25" width="72.50" height="3" fill="#008000"/>
<rect x="2840.25" y="1435.25" width="3" height="38.00" fill="#00c800"/>
<rect x="2841.75" y="1435.25" width="17.50" height="3" fill="#00f000"/>
<rect x="2857.75" y="1435.25" width="3" height="38.00" fill="#00c800"/>
<rect x="2859.25" y="1470.25" width="256.25" height="3" fill="#008000"/>
<rect x="831.00" y="1520.25" width="720.75" height="3" fill="#008000"/>
<rect x="1550.25" y="1485.25" width="3" height="38.00" fill="#00c800"/>
<rect x="1551.75" y="1485.25" width="17.50" height="3" fill="#00f000"/>
<rect x="1567.75" y="1485.25" width="3" height="38.00" fill="#00c800"/>
<rect x="1569.25" y="1520.25" width="70.00" height="3" fill="#008000"/>
<rect x="1637.75" y="1485.25" width="3" height="38.00" fill="#00c800"/>
<rect x="1639.25" y="1485.25" width="17.50" height="3" fill="#00f000"/>
<rect x="1655.25" y="1485.25" width="3" height="38.00" fill="#00c800"/>
<rect x="1656.75" y="1520.25" width="442.50" height="3" fill="#008000"/>
<rect x="2097.75" y="1485.25" width="3" height="38.00" fill="#00c800"/>
<rect x="2099.25" y="1485.25" width="17.50" height="3" fill="#00f000"/>
<rect x="2115.25" y="1485.25" width="3" height="38.00" fill="#00c800"/>
<rect x="2116.75" y="1520.25" width="70.00" height="3" fill="#008000"/>
<rect x="2185.25" y="1485.25" width="3" height="38.00" fill="#00c800"/>
<rect x="2186.75" y="1485.25" width="17.50" height="3" fill="#00f000"/>
<rect x="2202.75" y="1485.25" width="3" height="38.00" fill="#00c800"/>
<rect x="2204.25" y="1520.25" width="72.50" height="3" fill="#008000"/>
<rect x="2275.25" y="1485.25" width="3" height="38.00" fill="#00c800"/>
<rect x="2276.75" y="1485.25" width="17.50" height="3" fill="#00f000"/>
<rect x="2292.75" y="1485.25" width="3" height="38.00" fill="#00c800"/>
<rect x="2294.25" y="1520.25" width="440.00" height="3" fill="#008000"/>
<rect x="2732.75" y="1485.25" width="3" height="38.00" fill="#00c800"/>
<rect x="2734.25" y="1485.25" width="17.50" height="3" fill="#00f000"/>
<rect x="2750.25" y="1485.25" width="3" height="38.00" fill="#00c800"/>
<rect x="2751.75" y="1520.25" width="72.50" height="3" fill="#008000"/>
<rect x="2822.75" y="1485.25" width="3" height="38.00" fill="#00c800"/>
<rect x="2824.25" y="1485.25" width="17.50" height="3" fill="#00f000"/>
<rect x="2840.25" y="1485.25" width="3" height="38.00" fill="#00c800"/>
<rect x="2841.75" y="1520.25" width="273.75" height="3" fill="#008000"/>
<rect x="831.00" y="1185.25" width="5.75" height="3" fill="#00f000"/>
<rect x="835.25" y="1185.25" width="3" height="38.00" fill="#00c800"/>
<rect x="836.75" y="1220.25" width="7.50" height="3" fill="#008000"/>
<rect x="842.75" y="1185.25" width="3" height="38.00" fill="#00c800"/>
<rect x="844.25" y="1185.25" width="10.00" height="3" fill="#00f000"/>
<rect x="852.75" y="1185.25" width="3" height="38.00" fill="#00c800"/>
<rect x="854.25" y="1220.25" width="7.50" height="3" fill="#008000"/>
<rect x="860.25" y="1185.25" width="3" height="38.00" fill="#00c800"/>
<rect x="861.75" y="1185.25" width="10.00" height="3" fill="#00f000"/>
<rect x="870.25" y="1185.25" width="3" height="38.00" fill="#00c800"/>
<rect x="871.75" y="1220.25" width="7.50" height="3" fill="#008000"/>
<rect x="877.75" y="1185.25" width="3" height="38.00" fill="#00c800"/>
<rect x="879.25" y="1185.25" width="10.00" height="3" fill="#00f000"/>
<rect x="887.75" y="1185.25" width="3" height="38.00" fill="#00c800"/>
<rect x="889.25" y="1220.25" width="7.50" height="3" fill="#008000"/>
<rect x="895.25" y="1185.25" width="3" height="38.00" fill="#00c800"/>
<rect x="896.75" y="1185.25" width="10.00" height="3" fill="#00f000"/>
<rect x="905.25" y="1185.25" width="3" height="38.00" fill="#00c800"/>
<rect x="906.75" y="1220.25" width="7.50" height="3" fill="#008000"/>
<rect x="912.75" y="1185.25" width="3" height="38.00" fill="#00c800"/>
<rect x="914.25" y="1185.25" width="10.00" height="3" fill="#00f000"/>
<rect x="922.75" y="1185.25" width="3" height="38.00" fill="#00c800"/>
<rect x="924.25" y="1220.25" width="7.50" height="3" fill="#008000"/>
<rect x="930.25" y="1185.25" width="3" height="38.00" fill="#00c800"/>
<rect x="931.75" y="1185.25" width="10.00" height="3" fill="#00f000"/>
<rect x="940.25" y="1185.25" width="3" height="38.00" fill="#00c800"/>
<rect x="941.75" y="1220.25" width="10.00" height="3" fill="#008000"/>
<rect x="950.25" y="1185.25" width="3" height="38.00" fill="#00c800"/>
<rect x="951.75" y="1185.25" width="7.50" height="3" fill="#00f000"/>
<rect x="957.75" y="1185.25" width="3" height="38.00" fill="#00c800"/>
<rect x="959.25" y="1220.25" width="10.00" height="3" fill="#008000"/>
<rect x="967.75" y="1185.25" width="3" height="38.00" fill="#00c800"/>
<rect x="969.25" y="1185.25" width="7.50" height="3" fill="#00f000"/>
<rect x="975.25" y="1185.25" width="3" height="38.00" fill="#00c800"/>
<rect x="976.75" y="1220.25" width="10.00" height="3" fill="#008000"/>
<rect x="985.25" y="1185.25" width="3" height="38.00" fill="#00c800"/>
<rect x="986.75" y="1185.25" width="7.50" height="3" fill="#00f000"/>
<rect x="992.75" y="1185.25" width="3" height="38.00" fill="#00c800"/>
<rect x="994.25" y="1220.25" width="10.00" height="3" fill="#008000"/>
<rect x="1002.75" y="1185.25" width="3" height="38.00" fill="#00c800"/>
<rect x="1004.25" y="1185.25" width="7.50" height="3" fill="#00f000"/>
<rect x="1010.25" y="1185.25" width="3" height="38.00" fill="#00c800"/>
<rect x="1011.75" y="1220.25" width="10.00" height="3" fill="#008000"/>
<rect x="1020.25" y="1185.25" width="3" height="38.00" fill="#00c800"/>
<rect x="1021.75" y="1185.25" width="7.50" height="3" fill="#00f000"/>
<rect x="1027.75" y="1185.25" width="3" height="38.00" fill="#00c800"/>
<rect x="1029.25" y="1220.25" width="10.00" height="3" fill="#008000"/>
<rect x="1037.75" y="1185.25" width="3" height="38.00" fill="#00c800"/>
<rect x="1039.25" y="1185.25" width="7.50" height="3" fill="#00f000"/>
<rect x="1045.25" y="1185.25" width="3" height="38.00" fill="#00c800"/>
<rect x="1046.75" y="1220.25" width="10.00" height="3" fill="#008000"/>
<rect x="1055.25" y="1185.25" width="3" height="38.00" fill="#00c800"/>
<rect x="1056.75" y="1185.25" width="7.50" height="3" fill="#00f000"/>
<rect x="1062.75" y="1185.25" width="3" height="38.00" fill="#00c800"/>
<rect x="1064.25" y="1220.25" width="10.00" height="3" fill="#008000"/>
<rect x="1072.75" y="1185.25" width="3" height="38.00" fill="#00c800"/>
<rect x="1074.25" y="1185.25" width="10.00" height="3" fill="#00f000"/>
<rect x="1082.75" y="1185.25" width="3" height="38.00" fill="#00c800"/>
<rect x="1084.25" y="1220.25" width="7.50" height="3" fill="#008000"/>
<rect x="1090.25" y="1185.25" width="3" height="38.00" fill="#00c800"/>
<rect x="1091.75" y="1185.25" width="10.00" height="3" fill="#00f000"/>
<rect x="1100.25" y="1185.25" width="3" height="38.00" fill="#00c800"/>
<rect x="1101.75" y="1220.25" width="7.50" height="3" fill="#008000"/>
<rect x="1107.75" y="1185.25" width="3" height="38.00" fill="#00c800"/>
<rect x="1109.25" y="1185.25" width="10.00" height="3" fill="#00f000"/>
<rect x="1117.75" y="1185.25" width="3" height="38.00" fill="#00c800"/>
<rect x="1119.25" y="1220.25" width="7.50" height="3" fill="#008000"/>
<rect x="1125.25" y="1185.25" width="3" height="38.00" fill="#00c800"/>
<rect x="1126.75" y="1185.25" width="10.00" height="3" fill="#00f000"/>
<rect x="1135.25" y="1185.25" width="3" height="38.00" fill="#00c800"/>
<rect x="1136.75" y="1220.25" width="7.50" height="3" fill="#008000"/>
<rect x="1142.75" y="1185.25" width="3" height="38.00" fill="#00c800"/>
<rect x="1144.25" y="1185.25" width="10.00" height="3" fill="#00f000"/>
<rect x="1152.75" y="1185.25" width="3" height="38.00" fill="#00c800"/>
<rect x="1154.25" y="1220.25" width="7.50" height="3" fill="#008000"/>
<rect x="1160.25" y="1185.25" width="3" height="38.00" fill="#00c800"/>
<rect x="1161.75" y="1185.25" width="10.00" height="3" fill="#00f000"/>
<rect x="1170.25" y="1185.25" width="3" height="38.00" fill="#00c800"/>
<rect x="1171.75" y="1220.25" width="7.50" height="3" fill="#008000"/>
<rect x="1177.75" y="1185.25" width="3" height="38.00" fill="#00c800"/>
<rect x="1179.25" y="1185.25" width="10.00" height="3" fill="#00f000"/>
<rect x="1187.75" y="1185.25" width="3" height="38.00" fill="#00c800"/>
<rect x="1189.25" y="1220.25" width="7.50" height="3" fill="#008000"/>
<rect x="1195.25" y="1185.25" width="3" height="38.00" fill="#00c800"/>
<rect x="1196.75" y="1185.25" width="10.00" height="3" fill="#00f000"/>
<rect x="1205.25" y="1185.25" width="3" height="38.00" fill="#00c800"/>
<rect x="1206.75" y="1220.25" width="10.00" height="3" fill="#008000"/>
<rect x="1215.25" y="1185.25" width="3" height="38.00" fill="#00c800"/>
<rect x="1216.75" y="1185.25" width="7.50" height="3" fill="#00f000"/>
<rect x="1222.75" y="1185.25" width="3" height="38.00" fill="#00c800"/>
<rect x="1224.25" y="1220.25" width="10.00" height="3" fill="#008000"/>
<rect x="1232.75" y="1185.25" width="3" height="38.00" fill="#00c800"/>
<rect x="1234.25" y="1185.25" width="7.50" height="3" fill="#00f000"/>
<rect x="1240.25" y="1185.25" width="3" height="38.00" fill="#00c800"/>
<rect x="1241.75" y="1220.25" width="10.00" height="3" fill="#008000"/>
<rect x="1250.25" y="1185.25" width="3" height="38.00" fill="#00c800"/>
<rect x="1251.75" y="1185.25" width="7.50" height="3" fill="#00f000"/>
<rect x="1257.75" y="1185.25" width="3" height="38.00" fill="#00c800"/>
<rect x="1259.25" y="1220.25" width="10.00" height="3" fill="#008000"/>
<rect x="1267.75" y="1185.25" width="3" height="38.00" fill="#00c800"/>
<rect x="1269.25" y="1185.25" width="7.50" height="3" fill="#00f000"/>
<rect x="1275.25" y="1185.25" width="3" height="38.00" fill="#00c800"/>
<rect x="1276.75" y="1220.25" width="10.00" height="3" fill="#008000"/>
<rect x="1285.25" y="1185.25" width="3" height="38.00" fill="#00c800"/>
<rect x="1286.75" y="1185.25" width="7.50" height="3" fill="#00f000"/>
<rect x="1292.75" y="1185.25" width="3" height="38.00" fill="#00c800"/>
<rect x="1294.25" y="1220.25" width="10.00" height="3" fill="#008000"/>
<rect x="1302.75" y="1185.25" width="3" height="38.00" fill="#00c800"/>
<rect x="1304.25" y="1185.25" width="7.50" height="3" fill="#00f000"/>
<rect x="1310.25" y="1185.25" width="3" height="38.00" fill="#00c800"/>
<rect x="1311.75" y="1220.25" width="10.00" height="3" fill="#008000"/>
<rect x="1320.25" y="1185.25" width="3" height="38.00" fill="#00c800"/>
<rect x="1321.75" y="1185.25" width="10.00" height="3" fill="#00f000"/>
<rect x="1330.25" y="1185.25" width="3" height="38.00" fill="#00c800"/>
<rect x="1331.75" y="1220.25" width="7.50" height="3" fill="#008000"/>
<rect x="1337.75" y="1185.25" width="3" height="38.00" fill="#00c800"/>
<rect x="1339.25" y="1185.25" width="10.00" height="3" fill="#00f000"/>
<rect x="1347.75" y="1185.25" width="3" height="38.00" fill="#00c800"/>
<rect x="1349.25" y="1220.25" width="7.50" height="3" fill="#008000"/>
<rect x="1355.25" y="1185.25" width="3" height="38.00" fill="#00c800"/>
<rect x="1356.75" y="1185.25" width="10.00" height="3" fill="#00f000"/>
<rect x="1365.25" y="1185.25" width="3" height="38.00" fill="#00c800"/>
<rect x="1366.75" y="1220.25" width="7.50" height="3" fill="#008000"/>
<rect x="1372.75" y="1185.25" width="3" height="38.00" fill="#00c800"/>
<rect x="1374.25" y="1185.25" width="10.00" height="3" fill="#00f000"/>
<rect x="1382.75" y="1185.25" width="3" height="38.00" fill="#00c800"/>
<rect x="1384.25" y="1220.25" width="7.50" height="3" fill="#008000"/>
<rect x="1390.25" y="1185.25" width="3" height="38.00" fill="#00c800"/>
<rect x="1391.75" y="1185.25" width="10.00" height="3" fill="#00f000"/>
<rect x="1400.25" y="1185.25" width="3" height="38.00" fill="#00c800"/>
<rect x="1401.75" y="1220.25" width="7.50" height="3" fill="#008000"/>
<rect x="1407.75" y="1185.25" width="3" height="38.00" fill="#00c800"/>
<rect x="1409.25" y="1185.25" width="10.00" height="3" fill="#00f000"/>
<rect x="1417.75" y="1185.25" width="3" height="38.00" fill="#00c800"/>
<rect x="1419.25" y="1220.25" width="7.50" height="3" fill="#008000"/>
<rect x="1425.25" y="1185.25" width="3" height="38.00" fill="#00c800"/>
<rect x="1426.75" y="1185.25" width="10.00" height="3" fill="#00f000"/>
<rect x="1435.25" y="1185.25" width="3" height="38.00" fill="#00c800"/>
<rect x="1436.75" y="1220.25" width="7.50" height="3" fill="#008000"/>
<rect x="1442.75" y="1185.25" width="3" height="38.00" fill="#00c800"/>
<rect x="1444.25" y="1185.25" width="10.00" height="3" fill="#00f000"/>
<rect x="1452.75" y="1185.25" width="3" height="38.00" fill="#00c800"/>
<rect x="1454.25" y="1220.25" width="10.00" height="3" fill="#008000"/>
<rect x="1462.75" y="1185.25" width="3" height="38.00" fill="#00c800"/>
<rect x="1464.25" y="1185.25" width="7.50" height="3" fill="#00f000"/>
<rect x="1470.25" y="1185.25" width="3" height="38.00" fill="#00c800"/>
<rect x="1471.75" y="1220.25" width="10.00" height="3" fill="#008000"/>
<rect x="1480.25" y="1185.25" width="3" height="38.00" fill="#00c800"/>
<rect x="1481.75" y="1185.25" width="7.50" height="3" fill="#00f000"/>
<rect x="1487.75" y="1185.25" width="3" height="38.00" fill="#00c800"/>
<rect x="1489.25" y="1220.25" width="10.00" height="3" fill="#008000"/>
<rect x="1497.75" y="1185.25" width="3" height="38.00" fill="#00c800"/>
<rect x="1499.25" y="1185.25" width="7.50" height="3" fill="#00f000"/>
<rect x="1505.25" y="1185.25" width="3" height="38.00" fill="#00c800"/>
<rect x="1506.75" y="1220.25" width="10.00" height="3" fill="#008000"/>
<rect x="1515.25" y="1185.25" width="3" height="38.00" fill="#00c800"/>
<rect x="1516.75" y="1185.25" width="7.50" height="3" fill="#00f000"/>
<rect x="1522.75" y="1185.25" width="3" height="38.00" fill="#00c800"/>
<rect x="1524.25" y="1220.25" width="10.00" height="3" fill="#008000"/>
<rect x="1532.75" y="1185.25" width="3" height="38.00" fill="#00c800"/>
<rect x="1534.25" y="1185.25" width="7.50" height="3" fill="#00f000"/>
<rect x="1540.25" y="1185.25" width="3" height="38.00" fill="#00c800"/>
<rect x="1541.75" y="1220.25" width="10.00" height="3" fill="#008000"/>
<rect x="1550.25" y="1185.25" width="3" height="38.00" fill="#00c800"/>
<rect x="1551.75" y="1185.25" width="7.50" height="3" fill="#00f000"/>
<rect x="1557.75" y="1185.25" width="3" height="38.00" fill="#00c800"/>
<rect x="1559.25" y="1220.25" width="10.00" height="3" fill="#008000"/>
<rect x="1567.75" y="1185.25" width="3" height="38.00" fill="#00c800"/>
<rect x="1569.25" y="1185.25" width="7.50" height="3" fill="#00f000"/>
<rect x="1575.25" y="1185.25" width="3" height="38.00" fill="#00c800"/>
<rect x="1576.75" y="1220.25" width="10.00" height="3" fill="#008000"/>
<rect x="1585.25" y="1185.25" width="3" height="38.00" fill="#00c800"/>
<rect x="1586.75" y="1185.25" width="10.00" height="3" fill="#00f000"/>
<rect x="1595.25" y="1185.25" width="3" height="38.00" fill="#00c800"/>
<rect x="1596.75" y="1220.25" width="7.50" height="3" fill="#008000"/>
<rect x="1602.75" y="1185.25" width="3" height="38.00" fill="#00c800"/>
<rect x="1604.25" y="1185.25" width="10.00" height="3" fill="#00f000"/>
<rect x="1612.75" y="1185.25" width="3" height="38.00" fill="#00c800"/>
<rect x="1614.25" y="1220.25" width="7.50" height="3" fill="#008000"/>
<rect x="1620.25" y="1185.25" width="3" height="38.00" fill="#00c800"/>
<rect x="1621.75" y="1185.25" width="10.00" height="3" fill="#00f000"/>
<rect x="1630.25" y="1185.25" width="3" height="38.00" fill="#00c800"/>
<rect x="1631.75" y="1220.25" width="7.50" height="3" fill="#008000"/>
<rect x="1637.75" y="1185.25" width="3" height="38.00" fill="#00c800"/>
<rect x="1639.25" y="1185.25" width="10.00" height="3" fill="#00f000"/>
<rect x="1647.75" y="1185.25" width="3" height="38.00" fill="#00c800"/>
<rect x="1649.25" y="1220.25" width="7.50" height="3" fill="#008000"/>
<rect x="1655.25" y="1185.25" width="3" height="38.00" fill="#00c800"/>
<rect x="1656.75" y="1185.25" width="10.00" height="3" fill="#00f000"/>
<rect x="1665.25" y="1185.25" width="3" height="38.00" fill="#00c800"/>
<rect x="1666.75" y="1220.25" width="7.50" height="3" fill="#008000"/>
<rect x="1672.75" y="1185.25" width="3" height="38.00" fill="#00c800"/>
<rect x="1674.25" y="1185.25" width="10.00" height="3" fill="#00f000"/>
<rect x="1682.75" y="1185.25" width="3" height="38.00" fill="#00c800"/>
<rect x="1684.25" y="1220.25" width="7.50" height="3" fill="#008000"/>
<rect x="1690.25" y="1185.25" width="3" height="38.00" fill="#00c800"/>
<rect x="1691.75" y="1185.25" width="10.00" height="3" fill="#00f000"/>
<rect x="1700.25" y="1185.25" width="3" height="38.00" fill="#00c800"/>
<rect x="1701.75" y="1220.25" width="7.50" height="3" fill="#008000"/>
<rect x="1707.75" y="1185.25" width="3" height="38.00" fill="#00c800"/>
<rect x="1709.25" y="1185.25" width="10.00" height="3" fill="#00f000"/>
<rect x="1717.75" y="1185.25" width="3" height="38.00" fill="#00c800"/>
<rect x="1719.25" y="1220.25" width="10.00" height="3" fill="#008000"/>
<rect x="1727.75" y="1185.25" width="3" height="38.00" fill="#00c800"/>
<rect x="1729.25" y="1185.25" width="7.50" height="3" fill="#00f000"/>
<rect x="1735.25" y="1185.25" width="3" height="38.00" fill="#00c800"/>
<rect x="1736.75" y="1220.25" width="10.00" height="3" fill="#008000"/>
<rect x="1745.25" y="1185.25" width="3" height="38.00" fill="#00c800"/>
<rect x="1746.75" y="1185.25" width="7.50" height="3" fill="#00f000"/>
<rect x="1752.75" y="1185.25" width="3" height="38.00" fill="#00c800"/>
<rect x="1754.25" y="1220.25" width="10.00" height="3" fill="#008000"/>
<rect x="1762.75" y="1185.25" width="3" height="38.00" fill="#00c800"/>
<rect x="1764.25" y="1185.25" width="7.50" height="3" fill="#00f000"/>
<rect x="1770.25" y="1185.25" width="3" height="38.00" fill="#00c800"/>
<rect x="1771.75" y="1220.25" width="10.00" height="3" fill="#008000"/>
<rect x="1780.25" y="1185.25" width="3" height="38.00" fill="#00c800"/>
<rect x="1781.75" y="1185.25" width="7.50" height="3" fill="#00f000"/>
<rect x="1787.75" y="1185.25" width="3" height="38.00" fill="#00c800"/>
<rect x="1789.25" y="1220.25" width="10.00" height="3" fill="#008000"/>
<rect x="1797.75" y="1185.25" width="3" height="38.00" fill="#00c800"/>
<rect x="1799.25" y="1185.25" width="7.50" height="3" fill="#00f000"/>
<rect x="1805.25" y="1185.25" width="3" height="38.00" fill="#00c800"/>
<rect x="1806.75" y="1220.25" width="10.00" height="3" fill="#008000"/>
<rect x="1815.25" y="1185.25" width="3" height="38.00" fill="#00c800"/>
<rect x="1816.75" y="1185.25" width="7.50" height="3" fill="#00f000"/>
<rect x="1822.75" y="1185.25" width="3" height="38.00" fill="#00c800"/>
<rect x="1824.25" y="1220.25" width="10.00" height="3" fill="#008000"/>
<rect x="1832.75" y="1185.25" width="3" height="38.00" fill="#00c800"/>
<rect x="1834.25" y="1185.25" width="7.50" height="3" fill="#00f000"/>
<rect x="1840.25" y="1185.25" width="3" height="38.00" fill="#00c800"/>
<rect x="1841.75" y="1220.25" width="10.00" height="3" fill="#008000"/>
<rect x="1850.25" y="1185.25" width="3" height="38.00" fill="#00c800"/>
<rect x="1851.75" y="1185.25" width="10.00" height="3" fill="#00f000"/>
<rect x="1860.25" y="1185.25" width="3" height="38.00" fill="#00c800"/>
<rect x="1861.75" y="1220.25" width="7.50" height="3" fill="#008000"/>
<rect x="1867.75" y="1185.25" width="3" height="38.00" fill="#00c800"/>
<rect x="1869.25" y="1185.25" width="10.00" height="3" fill="#00f000"/>
<rect x="1877.75" y="1185.25" width="3" height="38.00" fill="#00c800"/>
<rect x="1879.25" y="1220.25" width="7.50" height="3" fill="#008000"/>
<rect x="1885.25" y="1185.25" width="3" height="38.00" fill="#00c800"/>
<rect x="1886.75" y="1185.25" width="10.00" height="3" fill="#00f000"/>
<rect x="1895.25" y="1185.25" width="3" height="38.00" fill="#00c800"/>
<rect x="1896.75" y="1220.25" width="7.50" height="3" fill="#008000"/>
<rect x="1902.75" y="1185.25" width="3" height="38.00" fill="#00c800"/>
<rect x="1904.25" y="1185.25" width="10.00" height="3" fill="#00f000"/>
<rect x="1912.75" y="1185.25" width="3" height="38.00" fill="#00c800"/>
<rect x="1914.25" y="1220.25" width="7.50" height="3" fill="#008000"/>
<rect x="1920.25" y="1185.25" width="3" height="38.00" fill="#00c800"/>
<rect x="1921.75" y="1185.25" width="10.00" height="3" fill="#00f000"/>
<rect x="1930.25" y="1185.25" width="3" height="38.00" fill="#00c800"/>
<rect x="1931.75" y="1220.25" width="7.50" height="3" fill="#008000"/>
<rect x="1937.75" y="1185.25" width="3" height="38.00" fill="#00c800"/>
<rect x="1939.25" y="1185.25" width="10.00" height="3" fill="#00f000"/>
<rect x="1947.75" y="1185.25" width="3" height="38.00" fill="#00c800"/>
<rect x="1949.25" y="1220.25" width="7.50" height="3" fill="#008000"/>
<rect x="1955.25" y="1185.25" width="3" height="38.00" fill="#00c800"/>
<rect x="1956.75" y="1185.25" width="10.00" height="3" fill="#00f000"/>
<rect x="1965.25" y="1185.25" width="3" height="38.00" fill="#00c800"/>
<rect x="1966.75" y="1220.25" width="7.50" height="3" fill="#008000"/>
<rect x="1972.75" y="1185.25" width="3" height="38.00" fill="#00c800"/>
<rect x="1974.25" y="1185.25" width="10.00" height="3" fill="#00f000"/>
<rect x="1982.75" y="1185.25" width="3" height="38.00" fill="#00c800"/>
<rect x="1984.25" y="1220.25" width="10.00" height="3" fill="#008000"/>
<rect x="1992.75" y="1185.25" width="3" height="38.00" fill="#00c800"/>
<rect x="1994.25" y="1185.25" width="7.50" height="3" fill="#00f000"/>
<rect x="2000.25" y="1185.25" width="3" height="38.00" fill="#00c800"/>
<rect x="2001.75" y="1220.25" width="10.00" height="3" fill="#008000"/>
<rect x="2010.25" y="1185.25" width="3" height="38.00" fill="#00c800"/>
<rect x="2011.75" y="1185.25" width="7.50" height="3" fill="#00f000"/>
<rect x="2017.75" y="1185.25" width="3" height="38.00" fill="#00c800"/>
<rect x="2019.25" y="1220.25" width="10.00" height="3" fill="#008000"/>
<rect x="2027.75" y="1185.25" width="3" height="38.00" fill="#00c800"/>
<rect x="2029.25" y="1185.25" width="7.50" height="3" fill="#00f000"/>
<rect x="2035.25" y="1185.25" width="3" height="38.00" fill="#00c800"/>
<rect x="2036.75" y="1220.25" width="10.00" height="3" fill="#008000"/>
<rect x="2045.25" y="1185.25" width="3" height="38.00" fill="#00c800"/>
<rect x="2046.75" y="1185.25" width="7.50" height="3" fill="#00f000"/>
<rect x="2052.75" y="1185.25" width="3" height="38.00" fill="#00c800"/>
<rect x="2054.25" y="1220.25" width="10.00" height="3" fill="#008000"/>
<rect x="2062.75" y="1185.25" width="3" height="38.00" fill="#00c800"/>
<rect x="2064.25" y="1185.25" width="7.50" height="3" fill="#00f000"/>
<rect x="2070.25" y="1185.25" width="3" height="38.00" fill="#00c800"/>
<rect x="2071.75" y="1220.25" width="10.00" height="3" fill="#008000"/>
<rect x="2080.25" y="1185.25" width="3" height="38.00" fill="#00c800"/>
<rect x="2081.75" y="1185.25" width="7.50" height="3" fill="#00f000"/>
<rect x="2087.75" y="1185.25" width="3" height="38.00" fill="#00c800"/>
<rect x="2089.25" y="1220.25" width="10.00" height="3" fill="#008000"/>
<rect x="2097.75" y="1185.25" width="3" height="38.00" fill="#00c800"/>
<rect x="2099.25" y="1185.25" width="7.50" height="3" fill="#00f000"/>
<rect x="2105.25" y="1185.25" width="3" height="38.00" fill="#00c800"/>
<rect x="2106.75" y="1220.25" width="10.00" height="3" fill="#008000"/>
<rect x="2115.25" y="1185.25" width="3" height="38.00" fill="#00c800"/>
<rect x="2116.75" y="1185.25" width="10.00" height="3" fill="#00f000"/>
<rect x="2125.25" y="1185.25" width="3" height="38.00" fill="#00c800"/>
<rect x="2126.75" y="1220.25" width="7.50" height="3" fill="#008000"/>
<rect x="2132.75" y="1185.25" width="3" height="38.00" fill="#00c800"/>
<rect x="2134.25" y="1185.25" width="10.00" height="3" fill="#00f000"/>
<rect x="2142.75" y="1185.25" width="3" height="38.00" fill="#00c800"/>
<rect x="2144.25" y="1220.25" width="7.50" height="3" fill="#008000"/>
<rect x="2150.25" y="1185.25" width="3" height="38.00" fill="#00c800"/>
<rect x="2151.75" y="1185.25" width="10.00" height="3" fill="#00f000"/>
<rect x="2160.25" y="1185.25" width="3" height="38.00" fill="#00c800"/>
<rect x="2161.75" y="1220.25" width="7.50" height="3" fill="#008000"/>
<rect x="2167.75" y="1185.25" width="3" height="38.00" fill="#00c800"/>
<rect x="2169.25" y="1185.25" width="10.00" height="3" fill="#00f000"/>
<rect x="2177.75" y="1185.25" width="3" height="38.00" fill="#00c800"/>
<rect x="2179.25" y="1220.25" width="7.50" height="3" fill="#008000"/>
<rect x="2185.25" y="1185.25" width="3" height="38.00" fill="#00c800"/>
<rect x="2186.75" y="1185.25" width="10.00" height="3" fill="#00f000"/>
<rect x="2195.25" y="1185.25" width="3" height="38.00" fill="#00c800"/>
<rect x="2196.75" y="1220.25" width="7.50" height="3" fill="#008000"/>
<rect x="2202.75" y="1185.25" width="3" height="38.00" fill="#00c800"/>
<rect x="2204.25" y="1185.25" width="10.00" height="3" fill="#00f000"/>
<rect x="2212.75" y="1185.25" width="3" height="38.00" fill="#00c800"/>
<rect x="2214.25" y="1220.25" width="7.50" height="3" fill="#008000"/>
<rect x="2220.25" y="1185.25" width="3" height="38.00" fill="#00c800"/>
<rect x="2221.75" y="1185.25" width="10.00" height="3" fill="#00f000"/>
<rect x="2230.25" y="1185.25" width="3" height="38.00" fill="#00c800"/>
<rect x="2231.75" y="1220.25" width="7.50" height="3" fill="#008000"/>
<rect x="2237.75" y="1185.25" width="3" height="38.00" fill="#00c800"/>
<rect x="2239.25" y="1185.25" width="10.00" height="3" fill="#00f000"/>
<rect x="2247.75" y="1185.25" width="3" height="38.00" fill="#00c800"/>
<rect x="2249.25" y="1220.25" width="10.00" height="3" fill="#008000"/>
<rect x="2257.75" y="1185.25" width="3" height="38.00" fill="#00c800"/>
<rect x="2259.25" y="1185.25" width="7.50" height="3" fill="#00f000"/>
<rect x="2265.25" y="1185.25" width="3" height="38.00" fill="#00c800"/>
<rect x="2266.75" y="1220.25" width="10.00" height="3" fill="#008000"/>
<rect x="2275.25" y="1185.25" width="3" height="38.00" fill="#00c800"/>
<rect x="2276.75" y="1185.25" width="7.50" height="3" fill="#00f000"/>
<rect x="2282.75" y="1185.25" width="3" height="38.00" fill="#00c800"/>
<rect x="2284.25" y="1220.25" width="10.00" height="3" fill="#008000"/>
<rect x="2292.75" y="1185.25" width="3" height="38.00" fill="#00c800"/>
<rect x="2294.25" y="1185.25" width="7.50" height="3" fill="#00f000"/>
<rect x="2300.25" y="1185.25" width="3" height="38.00" fill="#00c800"/>
<rect x="2301.75" y="1220.25" width="10.00" height="3" fill="#008000"/>
<rect x="2310.25" y="1185.25" width="3" height="38.00" fill="#00c800"/>
<rect x="2311.75" y="1185.25" width="7.50" height="3" fill="#00f000"/>
<rect x="2317.75" y="1185.25" width="3" height="38.00" fill="#00c800"/>
<rect x="2319.25" y="1220.25" width="10.00" height="3" fill="#008000"/>
<rect x="2327.75" y="1185.25" width="3" height="38.00" fill="#00c800"/>
<rect x="2329.25" y="1185.25" width="7.50" height="3" fill="#00f000"/>
<rect x="2335.25" y="1185.25" width="3" height="38.00" fill="#00c800"/>
<rect x="2336.75" y="1220.25" width="10.00" height="3" fill="#008000"/>
<rect x="2345.25" y="1185.25" width="3" height="38.00" fill="#00c800"/>
<rect x="2346.75" y="1185.25" width="7.50" height="3" fill="#00f000"/>
<rect x="2352.75" y="1185.25" width="3" height="38.00" fill="#00c800"/>
<rect x="2354.25" y="1220.25" width="10.00" height="3" fill="#008000"/>
<rect x="2362.75" y="1185.25" width="3" height="38.00" fill="#00c800"/>
<rect x="2364.25" y="1185.25" width="7.50" height="3" fill="#00f000"/>
<rect x="2370.25" y="1185.25" width="3" height="38.00" fill="#00c800"/>
<rect x="2371.75" y="1220.25" width="10.00" height="3" fill="#008000"/>
<rect x="2380.25" y="1185.25" width="3" height="38.00" fill="#00c800"/>
<rect x="2381.75" y="1185.25" width="10.00" height="3" fill="#00f000"/>
<rect x="2390.25" y="1185.25" width="3" height="38.00" fill="#00c800"/>
<rect x="2391.75" y="1220.25" width="7.50" height="3" fill="#008000"/>
<rect x="2397.75" y="1185.25" width="3" height="38.00" fill="#00c800"/>
<rect x="2399.25" y="1185.25" width="10.00" height="3" fill="#00f000"/>
<rect x="2407.75" y="1185.25" width="3" height="38.00" fill="#00c800"/>
<rect x="2409.25" y="1220.25" width="7.50" height="3" fill="#008000"/>
<rect x="2415.25" y="1185.25" width="3" height="38.00" fill="#00c800"/>
<rect x="2416.75" y="1185.25" width="10.00" height="3" fill="#00f000"/>
<rect x="2425.25" y="1185.25" width="3" height="38.00" fill="#00c800"/>
<rect x="2426.75" y="1220.25" width="7.50" height="3" fill="#008000"/>
<rect x="2432.75" y="1185.25" width="3" height="38.00" fill="#00c800"/>
<rect x="2434.25" y="1185.25" width="10.00" height="3" fill="#00f000"/>
<rect x="2442.75" y="1185.25" width="3" height="38.00" fill="#00c800"/>
<rect x="2444.25" y="1220.25" width="7.50" height="3" fill="#008000"/>
<rect x="2450.25" y="1185.25" width="3" height="38.00" fill="#00c800"/>
<rect x="2451.75" y="1185.25" width="10.00" height="3" fill="#00f000"/>
<rect x="2460.25" y="1185.25" width="3" height="38.00" fill="#00c800"/>
<rect x="2461.75" y="1220.25" width="7.50" height="3" fill="#008000"/>
<rect x="2467.75" y="1185.25" width="3" height="38.00" fill="#00c800"/>
<rect x="2469.25" y="1185.25" width="10.00" height="3" fill="#00f000"/>
<rect x="2477.75" y="1185.25" width="3" height="38.00" fill="#00c800"/>
<rect x="2479.25" y="1220.25" width="7.50" height="3" fill="#008000"/>
<rect x="2485.25" y="1185.25" width="3" height="38.00" fill="#00c800"/>
<rect x="2486.75" y="1185.25" width="10.00" height="3" fill="#00f000"/>
<rect x="2495.25" y="1185.25" width="3" height="38.00" fill="#00c800"/>
<rect x="2496.75" y="1220.25" width="7.50" height="3" fill="#008000"/>
<rect x="2502.75" y="1185.25" width="3" height="38.00" fill="#00c800"/>
<rect x="2504.25" y="1185.25" width="10.00" height="3" fill="#00f000"/>
<rect x="2512.75" y="1185.25" width="3" height="38.00" fill="#00c800"/>
<rect x="2514.25" y="1220.25" width="10.00" height="3" fill="#008000"/>
<rect x="2522.75" y="1185.25" width="3" height="38.00" fill="#00c800"/>
<rect x="2524.25" y="1185.25" width="7.50" height="3" fill="#00f000"/>
<rect x="2530.25" y="1185.25" width="3" height="38.00" fill="#00c800"/>
<rect x="2531.75" y="1220.25" width="10.00" height="3" fill="#008000"/>
<rect x="2540.25" y="1185.25" width="3" height="38.00" fill="#00c800"/>
<rect x="2541.75" y="1185.25" width="7.50" height="3" fill="#00f000"/>
<rect x="2547.75" y="1185.25" width="3" height="38.00" fill="#00c800"/>
<rect x="2549.25" y="1220.25" width="10.00" height="3" fill="#008000"/>
<rect x="2557.75" y="1185.25" width="3" height="38.00" fill="#00c800"/>
<rect x="2559.25" y="1185.25" width="7.50" height="3" fill="#00f000"/>
<rect x="2565.25" y="1185.25" width="3" height="38.00" fill="#00c800"/>
<rect x="2566.75" y="1220.25" width="10.00" height="3" fill="#008000"/>
<rect x="2575.25" y="1185.25" width="3" height="38.00" fill="#00c800"/>
<rect x="2576.75" y="1185.25" width="7.50" height="3" fill="#00f000"/>
<rect x="2582.75" y="1185.25" width="3" height="38.00" fill="#00c800"/>
<rect x="2584.25" y="1220.25" width="10.00" height="3" fill="#008000"/>
<rect x="2592.75" y="1185.25" width="3" height="38.00" fill="#00c800"/>
<rect x="2594.25" y="1185.25" width="7.50" height="3" fill="#00f000"/>
<rect x="2600.25" y="1185.25" width="3" height="38.00" fill="#00c800"/>
<rect x="2601.75" y="1220.25" width="10.00" height="3" fill="#008000"/>
<rect x="2610.25" y="1185.25" width="3" height="38.00" fill="#00c800"/>
<rect x="2611.75" y="1185.25" width="7.50" height="3" fill="#00f000"/>
<rect x="2617.75" y="1185.25" width="3" height="38.00" fill="#00c800"/>
<rect x="2619.25" y="1220.25" width="10.00" height="3" fill="#008000"/>
<rect x="2627.75" y="1185.25" width="3" height="38.00" fill="#00c800"/>
<rect x="2629.25" y="1185.25" width="7.50" height="3" fill="#00f000"/>
<rect x="2635.25" y="1185.25" width="3" height="38.00" fill="#00c800"/>
<rect x="2636.75" y="1220.25" width="10.00" height="3" fill="#008000"/>
<rect x="2645.25" y="1185.25" width="3" height="38.00" fill="#00c800"/>
<rect x="2646.75" y="1185.25" width="10.00" height="3" fill="#00f000"/>
<rect x="2655.25" y="1185.25" width="3" height="38.00" fill="#00c800"/>
<rect x="2656.75" y="1220.25" width="7.50" height="3" fill="#008000"/>
<rect x="2662.75" y="1185.25" width="3" height="38.00" fill="#00c800"/>
<rect x="2664.25" y="1185.25" width="10.00" height="3" fill="#00f000"/>
<rect x="2672.75" y="1185.25" width="3" height="38.00" fill="#00c800"/>
<rect x="2674.25" y="1220.25" width="7.50" height="3" fill="#008000"/>
<rect x="2680.25" y="1185.25" width="3" height="38.00" fill="#00c800"/>
<rect x="2681.75" y="1185.25" width="10.00" height="3" fill="#00f000"/>
<rect x="2690.25" y="1185.25" width="3" height="38.00" fill="#00c800"/>
<rect x="2691.75" y="1220.25" width="7.50" height="3" fill="#008000"/>
<rect x="2697.75" y="1185.25" width="3" height="38.00" fill="#00c800"/>
<rect x="2699.25" y="1185.25" width="10.00" height="3" fill="#00f000"/>
<rect x="2707.75" y="1185.25" width="3" height="38.00" fill="#00c800"/>
<rect x="2709.25" y="1220.25" width="7.50" height="3" fill="#008000"/>
<rect x="2715.25" y="1185.25" width="3" height="38.00" fill="#00c800"/>
<rect x="2716.75" y="1185.25" width="10.00" height="3" fill="#00f000"/>
<rect x="2725.25" y="1185.25" width="3" height="38.00" fill="#00c800"/>
<rect x="2726.75" y="1220.25" width="7.50" height="3" fill="#008000"/>
<rect x="2732.75" y="1185.25" width="3" height="38.00" fill="#00c800"/>
<rect x="2734.25" y="1185.25" width="10.00" height="3" fill="#00f000"/>
<rect x="2742.75" y="1185.25" width="3" height="38.00" fill="#00c800"/>
<rect x="2744.25" y="1220.25" width="7.50" height="3" fill="#008000"/>
<rect x="2750.25" y="1185.25" width="3" height="38.00" fill="#00c800"/>
<rect x="2751.75" y="1185.25" width="10.00" height="3" fill="#00f000"/>
<rect x="2760.25" y="1185.25" width="3" height="38.00" fill="#00c800"/>
<rect x="2761.75" y="1220.25" width="7.50" height="3" fill="#008000"/>
<rect x="2767.75" y="1185.25" width="3" height="38.00" fill="#00c800"/>
<rect x="2769.25" y="1185.25" width="10.00" height="3" fill="#00f000"/>
<rect x="2777.75" y="1185.25" width="3" height="38.00" fill="#00c800"/>
<rect x="2779.25" y="1220.25" width="10.00" height="3" fill="#008000"/>
<rect x="2787.75" y="1185.25" width="3" height="38.00" fill="#00c800"/>
<rect x="2789.25" y="1185.25" width="7.50" height="3" fill="#00f000"/>
<rect x="2795.25" y="1185.25" width="3" height="38.00" fill="#00c800"/>
<rect x="2796.75" y="1220.25" width="10.00" height="3" fill="#008000"/>
<rect x="2805.25" y="1185.25" width="3" height="38.00" fill="#00c800"/>
<rect x="2806.75" y="1185.25" width="7.50" height="3" fill="#00f000"/>
<rect x="2812.75" y="1185.25" width="3" height="38.00" fill="#00c800"/>
<rect x="2814.25" y="1220.25" width="10.00" height="3" fill="#008000"/>
<rect x="2822.75" y="1185.25" width="3" height="38.00" fill="#00c800"/>
<rect x="2824.25" y="1185.25" width="7.50" height="3" fill="#00f000"/>
<rect x="2830.25" y="1185.25" width="3" height="38.00" fill="#00c800"/>
<rect x="2831.75" y="1220.25" width="10.00" height="3" fill="#008000"/>
<rect x="2840.25" y="1185.25" width="3" height="38.00" fill="#00c800"/>
<rect x="2841.75" y="1185.25" width="7.50" height="3" fill="#00f000"/>
<rect x="2847.75" y="1185.25" width="3" height="38.00" fill="#00c800"/>
<rect x="2849.25" y="1220.25" width="10.00" height="3" fill="#008000"/>
<rect x="2857.75" y="1185.25" width="3" height="38.00" fill="#00c800"/>
<rect x="2859.25" y="1185.25" width="7.50" height="3" fill="#00f000"/>
<rect x="2865.25" y="1185.25" width="3" height="38.00" fill="#00c800"/>
<rect x="2866.75" y="1220.25" width="10.00" height="3" fill="#008000"/>
<rect x="2875.25" y="1185.25" width="3" height="38.00" fill="#00c800"/>
<rect x="2876.75" y="1185.25" width="7.50" height="3" fill="#00f000"/>
<rect x="2882.75" y="1185.25" width="3" height="38.00" fill="#00c800"/>
<rect x="2884.25" y="1220.25" width="10.00" height="3" fill="#008000"/>
<rect x="2892.75" y="1185.25" width="3" height="38.00" fill="#00c800"/>
<rect x="2894.25" y="1185.25" width="7.50" height="3" fill="#00f000"/>
<rect x="2900.25" y="1185.25" width="3" height="38.00" fill="#00c800"/>
<rect x="2901.75" y="1220.25" width="10.00" height="3" fill="#008000"/>
<rect x="2910.25" y="1185.25" width="3" height="38.00" fill="#00c800"/>
<rect x="2911.75" y="1185.25" width="10.00" height="3" fill="#00f000"/>
<rect x="2920.25" y="1185.25" width="3" height="38.00" fill="#00c800"/>
<rect x="2921.75" y="1220.25" width="7.50" height="3" fill="#008000"/>
<rect x="2927.75" y="1185.25" width="3" height="38.00" fill="#00c800"/>
<rect x="2929.25" y="1185.25" width="10.00" height="3" fill="#00f000"/>
<rect x="2937.75" y="1185.25" width="3" height="38.00" fill="#00c800"/>
<rect x="2939.25" y="1220.25" width="7.50" height="3" fill="#008000"/>
<rect x="2945.25" y="1185.25" width="3" height="38.00" fill="#00c800"/>
<rect x="2946.75" y="1185.25" width="10.00" height="3" fill="#00f000"/>
<rect x="2955.25" y="1185.25" width="3" height="38.00" fill="#00c800"/>
<rect x="2956.75" y="1220.25" width="7.50" height="3" fill="#008000"/>
<rect x="2962.75" y="1185.25" width="3" height="38.00" fill="#00c800"/>
<rect x="2964.25" y="1185.25" width="10.00" height="3" fill="#00f000"/>
<rect x="2972.75" y="1185.25" width="3" height="38.00" fill="#00c800"/>
<rect x="2974.25" y="1220.25" width="7.50" height="3" fill="#008000"/>
<rect x="2980.25" y="1185.25" width="3" height="38.00" fill="#00c800"/>
<rect x="2981.75" y="1185.25" width="10.00" height="3" fill="#00f000"/>
<rect x="2990.25" y="1185.25" width="3" height="38.00" fill="#00c800"/>
<rect x="2991.75" y="1220.25" width="7.50" height="3" fill="#008000"/>
<rect x="2997.75" y="1185.25" width="3" height="38.00" fill="#00c800"/>
<rect x="2999.25" y="1185.25" width="10.00" height="3" fill="#00f000"/>
<rect x="3007.75" y="1185.25" width="3" height="38.00" fill="#00c800"/>
<rect x="3009.25" y="1220.25" width="7.50" height="3" fill="#008000"/>
<rect x="3015.25" y="1185.25" width="3" height="38.00" fill="#00c800"/>
<rect x="3016.75" y="1185.25" width="10.00" height="3" fill="#00f000"/>
<rect x="3025.25" y="1185.25" width="3" height="38.00" fill="#00c800"/>
<rect x="3026.75" y="1220.25" width="7.50" height="3" fill="#008000"/>
<rect x="3032.75" y="1185.25" width="3" height="38.00" fill="#00c800"/>
<rect x="3034.25" y="1185.25" width="10.00" height="3" fill="#00f000"/>
<rect x="3042.75" y="1185.25" width="3" height="38.00" fill="#00c800"/>
<rect x="3044.25" y="1220.25" width="10.00" height="3" fill="#008000"/>
<rect x="3052.75" y="1185.25" width="3" height="38.00" fill="#00c800"/>
<rect x="3054.25" y="1185.25" width="7.50" height="3" fill="#00f000"/>
<rect x="3060.25" y="1185.25" width="3" height="38.00" fill="#00c800"/>
<rect x="3061.75" y="1220.25" width="10.00" height="3" fill="#008000"/>
<rect x="3070.25" y="1185.25" width="3" height="38.00" fill="#00c800"/>
<rect x="3071.75" y="1185.25" width="7.50" height="3" fill="#00f000"/>
<rect x="3077.75" y="1185.25" width="3" height="38.00" fill="#00c800"/>
<rect x="3079.25" y="1220.25" width="10.00" height="3" fill="#008000"/>
<rect x="3087.75" y="1185.25" width="3" height="38.00" fill="#00c800"/>
<rect x="3089.25" y="1185.25" width="7.50" height="3" fill="#00f000"/>
<rect x="3095.25" y="1185.25" width="3" height="38.00" fill="#00c800"/>
<rect x="3096.75" y="1220.25" width="10.00" height="3" fill="#008000"/>
<rect x="3105.25" y="1185.25" width="3" height="38.00" fill="#00c800"/>
<rect x="3106.75" y="1185.25" width="7.50" height="3" fill="#00f000"/>
<rect x="3112.75" y="1185.25" width="3" height="38.00" fill="#00c800"/>
<rect x="3114.25" y="1220.25" width="1.25" height="3" fill="#008000"/>
<rect x="831.0" y="936.75" width="2284.5" height="35.0" fill="#440000"/>
<rect x="831.00" y="935.25" width="2284.50" height="3" fill="#e60000"/>
<rect x="831.00" y="970.25" width="2284.50" height="3" fill="#e60000"/>
<rect x="833.00" y="135.25" width="6.85" height="3" fill="#00f000"/>
<rect x="833.00" y="170.25" width="6.85" height="3" fill="#00f000"/>
<path d="M 839.85 136.75 L 844.25 154.25 L 839.85 171.75" stroke="#00c800" stroke-width="2.4" fill="none"/>
<rect x="848.65" y="135.25" width="8.70" height="3" fill="#00f000"/>
<rect x="848.65" y="170.25" width="8.70" height="3" fill="#00f000"/>
<path d="M 848.65 136.75 L 844.25 154.25 L 848.65 171.75 M 857.35 136.75 L 861.75 154.25 L 857.35 171.75" stroke="#00c800" stroke-width="2.4" fill="none"/>
<rect x="866.15" y="135.25" width="486.20" height="3" fill="#00f000"/>
<rect x="866.15" y="170.25" width="486.20" height="3" fill="#00f000"/>
<path d="M 866.15 136.75 L 861.75 154.25 L 866.15 171.75 M 1352.35 136.75 L 1356.75 154.25 L 1352.35 171.75" stroke="#00c800" stroke-width="2.4" fill="none"/>
<rect x="1361.15" y="135.25" width="8.70" height="3" fill="#00f000"/>
<rect x="1361.15" y="170.25" width="8.70" height="3" fill="#00f000"/>
<path d="M 1361.15 136.75 L 1356.75 154.25 L 1361.15 171.75 M 1369.85 136.75 L 1374.25 154.25 L 1369.85 171.75" stroke="#00c800" stroke-width="2.4" fill="none"/>
<rect x="1378.65" y="135.25" width="8.70" height="3" fill="#00f000"/>
<rect x="1378.65" y="170.25" width="8.70" height="3" fill="#00f000"/>
<path d="M 1378.65 136.75 L 1374.25 154.25 L 1378.65 171.75 M 1387.35 136.75 L 1391.75 154.25 L 1387.35 171.75" stroke="#00c800" stroke-width="2.4" fill="none"/>
<rect x="1396.15" y="135.25" width="43.70" height="3" fill="#00f000"/>
<rect x="1396.15" y="170.25" width="43.70" height="3" fill="#00f000"/>
<path d="M 1396.15 136.75 L 1391.75 154.25 L 1396.15 171.75 M 1439.85 136.75 L 1444.25 154.25 L 1439.85 171.75" stroke="#00c800" stroke-width="2.4" fill="none"/>
<rect x="1448.65" y="135.25" width="416.20" height="3" fill="#00f000"/>
<rect x="1448.65" y="170.25" width="416.20" height="3" fill="#00f000"/>
<path d="M 1448.65 136.75 L 1444.25 154.25 L 1448.65 171.75 M 1864.85 136.75 L 1869.25 154.25 L 1864.85 171.75" stroke="#00c800" stroke-width="2.4" fill="none"/>
<rect x="1873.65" y="135.25" width="8.70" height="3" fill="#00f000"/>
<rect x="1873.65" y="170.25" width="8.70" height="3" fill="#00f000"/>
<path d="M 1873.65 136.75 L 1869.25 154.25 L 1873.65 171.75 M 1882.35 136.75 L 1886.75 154.25 L 1882.35 171.75" stroke="#00c800" stroke-width="2.4" fill="none"/>
<rect x="1891.15" y="135.25" width="8.70" height="3" fill="#00f000"/>
<rect x="1891.15" y="170.25" width="8.70" height="3" fill="#00f000"/>
<path d="M 1891.15 136.75 L 1886.75 154.25 L 1891.15 171.75 M 1899.85 136.75 L 1904.25 154.25 L 1899.85 171.75" stroke="#00c800" stroke-width="2.4" fill="none"/>
<rect x="1908.65" y="135.25" width="26.20" height="3" fill="#00f000"/>
<rect x="1908.65" y="170.25" width="26.20" height="3" fill="#00f000"/>
<path d="M 1908.65 136.75 L 1904.25 154.25 L 1908.65 171.75 M 1934.85 136.75 L 1939.25 154.25 L 1934.85 171.75" stroke="#00c800" stroke-width="2.4" fill="none"/>
<rect x="1943.65" y="135.25" width="46.20" height="3" fill="#00f000"/>
<rect x="1943.65" y="170.25" width="46.20" height="3" fill="#00f000"/>
<path d="M 1943.65 136.75 L 1939.25 154.25 L 1943.65 171.75 M 1989.85 136.75 L 1994.25 154.25 L 1989.85 171.75" stroke="#00c800" stroke-width="2.4" fill="none"/>
<rect x="1998.65" y="135.25" width="26.20" height="3" fill="#00f000"/>
<rect x="1998.65" y="170.25" width="26.20" height="3" fill="#00f000"/>
<path d="M 1998.65 136.75 L 1994.25 154.25 L 1998.65 171.75 M 2024.85 136.75 L 2029.25 154.25 L 2024.85 171.75" stroke="#00c800" stroke-width="2.4" fill="none"/>
<rect x="2033.65" y="135.25" width="43.70" height="3" fill="#00f000"/>
<rect x="2033.65" y="170.25" width="43.70" height="3" fill="#00f000"/>
<path d="M 2033.65 136.75 L 2029.25 154.25 L 2033.65 171.75 M 2077.35 136.75 L 2081.75 154.25 L 2077.35 171.75" stroke="#00c800" stroke-width="2.4" fill="none"/>
<rect x="2086.15" y="135.25" width="8.70" height="3" fill="#00f000"/>
<rect x="2086.15" y="170.25" width="8.70" height="3" fill="#00f000"/>
<path d="M 2086.15 136.75 L 2081.75 154.25 L 2086.15 171.75 M 2094.85 136.75 L 2099.25 154.25 L 2094.85 171.75" stroke="#00c800" stroke-width="2.4" fill="none"/>
<rect x="2103.65" y="135.25" width="416.20" height="3" fill="#00f000"/>
<rect x="2103.65" y="170.25" width="416.20" height="3" fill="#00f000"/>
<path d="M 2103.65 136.75 L 2099.25 154.25 L 2103.65 171.75 M 2519.85 136.75 L 2524.25 154.25 L 2519.85 171.75" stroke="#00c800" stroke-width="2.4" fill="none"/>
<rect x="2528.65" y="135.25" width="8.70" height="3" fill="#00f000"/>
<rect x="2528.65" y="170.25" width="8.70" height="3" fill="#00f000"/>
<path d="M 2528.65 136.75 L 2524.25 154.25 L 2528.65 171.75 M 2537.35 136.75 L 2541.75 154.25 L 2537.35 171.75" stroke="#00c800" stroke-width="2.4" fill="none"/>
<rect x="2546.15" y="135.25" width="8.70" height="3" fill="#00f000"/>
<rect x="2546.15" y="170.25" width="8.70" height="3" fill="#00f000"/>
<path d="M 2546.15 136.75 L 2541.75 154.25 L 2546.15 171.75 M 2554.85 136.75 L 2559.25 154.25 L 2554.85 171.75" stroke="#00c800" stroke-width="2.4" fill="none"/>
<rect x="2563.65" y="135.25" width="8.70" height="3" fill="#00f000"/>
<rect x="2563.65" y="170.25" width="8.70" height="3" fill="#00f000"/>
<path d="M 2563.65 136.75 L 2559.25 154.25 L 2563.65 171.75 M 2572.35 136.75 L 2576.75 154.25 L 2572.35 171.75" stroke="#00c800" stroke-width="2.4" fill="none"/>
<rect x="2581.15" y="135.25" width="43.70" height="3" fill="#00f000"/>
<rect x="2581.15" y="170.25" width="43.70" height="3" fill="#00f000"/>
<path d="M 2581.15 136.75 L 2576.75 154.25 L 2581.15 171.75 M 2624.85 136.75 L 2629.25 154.25 L 2624.85 171.75" stroke="#00c800" stroke-width="2.4" fill="none"/>
<rect x="2633.65" y="135.25" width="8.70" height="3" fill="#00f000"/>
<rect x="2633.65" y="170.25" width="8.70" height="3" fill="#00f000"/>
<path d="M 2633.65 136.75 L 2629.25 154.25 L 2633.65 171.75 M 2642.35 136.75 L 2646.75 154.25 L 2642.35 171.75" stroke="#00c800" stroke-width="2.4" fill="none"/>
<rect x="2651.15" y="135.25" width="8.70" height="3" fill="#00f000"/>
<rect x="2651.15" y="170.25" width="8.70" height="3" fill="#00f000"/>
<path d="M 2651.15 136.75 L 2646.75 154.25 L 2651.15 171.75 M 2659.85 136.75 L 2664.25 154.25 L 2659.85 171.75" stroke="#00c800" stroke-width="2.4" fill="none"/>
<rect x="2668.65" y="135.25" width="43.70" height="3" fill="#00f000"/>
<rect x="2668.65" y="170.25" width="43.70" height="3" fill="#00f000"/>
<path d="M 2668.65 136.75 L 2664.25 154.25 L 2668.65 171.75 M 2712.35 136.75 L 2716.75 154.25 L 2712.35 171.75" stroke="#00c800" stroke-width="2.4" fill="none"/>
<rect x="2721.15" y="135.25" width="388.85" height="3" fill="#00f000"/>
<rect x="2721.15" y="170.25" width="388.85" height="3" fill="#00f000"/>
<path d="M 2721.15 136.75 L 2716.75 154.25 L 2721.15 171.75" stroke="#00c800" stroke-width="2.4" fill="none"/>
<rect x="833.00" y="335.25" width="4.35" height="3" fill="#f07800"/>
<rect x="833.00" y="370.25" width="4.35" height="3" fill="#f07800"/>
<path d="M 837.35 336.75 L 841.75 354.25 L 837.35 371.75" stroke="#f07800" stroke-width="2.4" fill="none"/>
<rect x="846.15" y="335.25" width="11.20" height="3" fill="#f07800"/>
<rect x="846.15" y="370.25" width="11.20" height="3" fill="#f07800"/>
<path d="M 846.15 336.75 L 841.75 354.25 L 846.15 371.75 M 857.35 336.75 L 861.75 354.25 L 857.35 371.75" stroke="#f07800" stroke-width="2.4" fill="none"/>
<rect x="866.15" y="335.25" width="483.70" height="3" fill="#f07800"/>
<rect x="866.15" y="370.25" width="483.70" height="3" fill="#f07800"/>
<path d="M 866.15 336.75 L 861.75 354.25 L 866.15 371.75 M 1349.85 336.75 L 1354.25 354.25 L 1349.85 371.75" stroke="#f07800" stroke-width="2.4" fill="none"/>
<rect x="1358.65" y="335.25" width="8.70" height="3" fill="#f07800"/>
<rect x="1358.65" y="370.25" width="8.70" height="3" fill="#f07800"/>
<path d="M 1358.65 336.75 L 1354.25 354.25 L 1358.65 371.75 M 1367.35 336.75 L 1371.75 354.25 L 1367.35 371.75" stroke="#f07800" stroke-width="2.4" fill="none"/>
<rect x="1376.15" y="335.25" width="11.20" height="3" fill="#f07800"/>
<rect x="1376.15" y="370.25" width="11.20" height="3" fill="#f07800"/>
<path d="M 1376.15 336.75 L 1371.75 354.25 L 1376.15 371.75 M 1387.35 336.75 L 1391.75 354.25 L 1387.35 371.75" stroke="#f07800" stroke-width="2.4" fill="none"/>
<rect x="1396.15" y="335.25" width="43.70" height="3" fill="#f07800"/>
<rect x="1396.15" y="370.25" width="43.70" height="3" fill="#f07800"/>
<path d="M 1396.15 336.75 L 1391.75 354.25 L 1396.15 371.75 M 1439.85 336.75 L 1444.25 354.25 L 1439.85 371.75" stroke="#f07800" stroke-width="2.4" fill="none"/>
<rect x="1448.65" y="335.25" width="413.70" height="3" fill="#f07800"/>
<rect x="1448.65" y="370.25" width="413.70" height="3" fill="#f07800"/>
<path d="M 1448.65 336.75 L 1444.25 354.25 L 1448.65 371.75 M 1862.35 336.75 L 1866.75 354.25 L 1862.35 371.75" stroke="#f07800" stroke-width="2.4" fill="none"/>
<rect x="1871.15" y="335.25" width="8.70" height="3" fill="#f07800"/>
<rect x="1871.15" y="370.25" width="8.70" height="3" fill="#f07800"/>
<path d="M 1871.15 336.75 L 1866.75 354.25 L 1871.15 371.75 M 1879.85 336.75 L 1884.25 354.25 L 1879.85 371.75" stroke="#f07800" stroke-width="2.4" fill="none"/>
<rect x="1888.65" y="335.25" width="8.70" height="3" fill="#f07800"/>
<rect x="1888.65" y="370.25" width="8.70" height="3" fill="#f07800"/>
<path d="M 1888.65 336.75 L 1884.25 354.25 L 1888.65 371.75 M 1897.35 336.75 L 1901.75 354.25 L 1897.35 371.75" stroke="#f07800" stroke-width="2.4" fill="none"/>
<rect x="1906.15" y="335.25" width="28.70" height="3" fill="#f07800"/>
<rect x="1906.15" y="370.25" width="28.70" height="3" fill="#f07800"/>
<path d="M 1906.15 336.75 L 1901.75 354.25 L 1906.15 371.75 M 1934.85 336.75 L 1939.25 354.25 L 1934.85 371.75" stroke="#f07800" stroke-width="2.4" fill="none"/>
<rect x="1943.65" y="335.25" width="43.70" height="3" fill="#f07800"/>
<rect x="1943.65" y="370.25" width="43.70" height="3" fill="#f07800"/>
<path d="M 1943.65 336.75 L 1939.25 354.25 L 1943.65 371.75 M 1987.35 336.75 L 1991.75 354.25 L 1987.35 371.75" stroke="#f07800" stroke-width="2.4" fill="none"/>
<rect x="1996.15" y="335.25" width="26.20" height="3" fill="#f07800"/>
<rect x="1996.15" y="370.25" width="26.20" height="3" fill="#f07800"/>
<path d="M 1996.15 336.75 L 1991.75 354.25 L 1996.15 371.75 M 2022.35 336.75 L 2026.75 354.25 L 2022.35 371.75" stroke="#f07800" stroke-width="2.4" fill="none"/>
<rect x="2031.15" y="335.25" width="43.70" height="3" fill="#f07800"/>
<rect x="2031.15" y="370.25" width="43.70" height="3" fill="#f07800"/>
<path d="M 2031.15 336.75 L 2026.75 354.25 L 2031.15 371.75 M 2074.85 336.75 L 2079.25 354.25 L 2074.85 371.75" stroke="#f07800" stroke-width="2.4" fill="none"/>
<rect x="2083.65" y="335.25" width="8.70" height="3" fill="#f07800"/>
<rect x="2083.65" y="370.25" width="8.70" height="3" fill="#f07800"/>
<path d="M 2083.65 336.75 L 2079.25 354.25 L 2083.65 371.75 M 2092.35 336.75 L 2096.75 354.25 L 2092.35 371.75" stroke="#f07800" stroke-width="2.4" fill="none"/>
<rect x="2101.15" y="335.25" width="416.20" height="3" fill="#f07800"/>
<rect x="2101.15" y="370.25" width="416.20" height="3" fill="#f07800"/>
<path d="M 2101.15 336.75 L 2096.75 354.25 L 2101.15 371.75 M 2517.35 336.75 L 2521.75 354.25 L 2517.35 371.75" stroke="#f07800" stroke-width="2.4" fill="none"/>
<rect x="2526.15" y="335.25" width="8.70" height="3" fill="#f07800"/>
<rect x="2526.15" y="370.25" width="8.70" height="3" fill="#f07800"/>
<path d="M 2526.15 336.75 L 2521.75 354.25 L 2526.15 371.75 M 2534.85 336.75 L 2539.25 354.25 L 2534.85 371.75" stroke="#f07800" stroke-width="2.4" fill="none"/>
<rect x="2543.65" y="335.25" width="8.70" height="3" fill="#f07800"/>
<rect x="2543.65" y="370.25" width="8.70" height="3" fill="#f07800"/>
<path d="M 2543.65 336.75 L 2539.25 354.25 L 2543.65 371.75 M 2552.35 336.75 L 2556.75 354.25 L 2552.35 371.75" stroke="#f07800" stroke-width="2.4" fill="none"/>
<rect x="2561.15" y="335.25" width="8.70" height="3" fill="#f07800"/>
<rect x="2561.15" y="370.25" width="8.70" height="3" fill="#f07800"/>
<path d="M 2561.15 336.75 L 2556.75 354.25 L 2561.15 371.75 M 2569.85 336.75 L 2574.25 354.25 L 2569.85 371.75" stroke="#f07800" stroke-width="2.4" fill="none"/>
<rect x="2578.65" y="335.25" width="43.70" height="3" fill="#f07800"/>
<rect x="2578.65" y="370.25" width="43.70" height="3" fill="#f07800"/>
<path d="M 2578.65 336.75 L 2574.25 354.25 L 2578.65 371.75 M 2622.35 336.75 L 2626.75 354.25 L 2622.35 371.75" stroke="#f07800" stroke-width="2.4" fill="none"/>
<rect x="2631.15" y="335.25" width="8.70" height="3" fill="#f07800"/>
<rect x="2631.15" y="370.25" width="8.70" height="3" fill="#f07800"/>
<path d="M 2631.15 336.75 L 2626.75 354.25 L 2631.15 371.75 M 2639.85 336.75 L 2644.25 354.25 L 2639.85 371.75" stroke="#f07800" stroke-width="2.4" fill="none"/>
<rect x="2648.65" y="335.25" width="8.70" height="3" fill="#f07800"/>
<rect x="2648.65" y="370.25" width="8.70" height="3" fill="#f07800"/>
<path d="M 2648.65 336.75 L 2644.25 354.25 L 2648.65 371.75 M 2657.35 336.75 L 2661.75 354.25 L 2657.35 371.75" stroke="#f07800" stroke-width="2.4" fill="none"/>
<rect x="2666.15" y="335.25" width="46.20" height="3" fill="#f07800"/>
<rect x="2666.15" y="370.25" width="46.20" height="3" fill="#f07800"/>
<path d="M 2666.15 336.75 L 2661.75 354.25 L 2666.15 371.75 M 2712.35 336.75 L 2716.75 354.25 L 2712.35 371.75" stroke="#f07800" stroke-width="2.4" fill="none"/>
<rect x="2721.15" y="335.25" width="388.85" height="3" fill="#f07800"/>
<rect x="2721.15" y="370.25" width="388.85" height="3" fill="#f07800"/>
<path d="M 2721.15 336.75 L 2716.75 354.25 L 2721.15 371.75" stroke="#f07800" stroke-width="2.4" fill="none"/>
<rect x="833.00" y="220.25" width="2277.00" height="3" fill="#00f000"/>
<rect x="833.00" y="235.25" width="2277.00" height="3" fill="#00f000"/>
<rect x="833.00" y="270.25" width="2277.00" height="3" fill="#00f000"/>
<rect x="833.00" y="285.25" width="2277.00" height="3" fill="#00f000"/>
<rect x="833.00" y="320.25" width="2277.00" height="3" fill="#00f000"/>
<rect x="833.00" y="384.55" width="2277.00" height="5.4" fill="#00f000"/>
<rect x="833.00" y="420.25" width="2277.00" height="3" fill="#00f000"/>
<rect x="833.00" y="535.25" width="6.85" height="3" fill="#00f000"/>
<rect x="833.00" y="570.25" width="6.85" height="3" fill="#00f000"/>
<path d="M 839.85 536.75 L 844.25 554.25 L 839.85 571.75" stroke="#00c800" stroke-width="2.4" fill="none"/>
<rect x="848.65" y="535.25" width="8.70" height="3" fill="#00f000"/>
<rect x="848.65" y="570.25" width="8.70" height="3" fill="#00f000"/>
<path d="M 848.65 536.75 L 844.25 554.25 L 848.65 571.75 M 857.35 536.75 L 861.75 554.25 L 857.35 571.75" stroke="#00c800" stroke-width="2.4" fill="none"/>
<rect x="866.15" y="535.25" width="486.20" height="3" fill="#00f000"/>
<rect x="866.15" y="570.25" width="486.20" height="3" fill="#00f000"/>
<path d="M 866.15 536.75 L 861.75 554.25 L 866.15 571.75 M 1352.35 536.75 L 1356.75 554.25 L 1352.35 571.75" stroke="#00c800" stroke-width="2.4" fill="none"/>
<rect x="1361.15" y="535.25" width="8.70" height="3" fill="#00f000"/>
<rect x="1361.15" y="570.25" width="8.70" height="3" fill="#00f000"/>
<path d="M 1361.15 536.75 L 1356.75 554.25 L 1361.15 571.75 M 1369.85 536.75 L 1374.25 554.25 L 1369.85 571.75" stroke="#00c800" stroke-width="2.4" fill="none"/>
<rect x="1378.65" y="535.25" width="8.70" height="3" fill="#00f000"/>
<rect x="1378.65" y="570.25" width="8.70" height="3" fill="#00f000"/>
<path d="M 1378.65 536.75 L 1374.25 554.25 L 1378.65 571.75 M 1387.35 536.75 L 1391.75 554.25 L 1387.35 571.75" stroke="#00c800" stroke-width="2.4" fill="none"/>
<rect x="1396.15" y="535.25" width="43.70" height="3" fill="#00f000"/>
<rect x="1396.15" y="570.25" width="43.70" height="3" fill="#00f000"/>
<path d="M 1396.15 536.75 L 1391.75 554.25 L 1396.15 571.75 M 1439.85 536.75 L 1444.25 554.25 L 1439.85 571.75" stroke="#00c800" stroke-width="2.4" fill="none"/>
<rect x="1448.65" y="535.25" width="11.20" height="3" fill="#00f000"/>
<rect x="1448.65" y="570.25" width="11.20" height="3" fill="#00f000"/>
<path d="M 1448.65 536.75 L 1444.25 554.25 L 1448.65 571.75 M 1459.85 536.75 L 1464.25 554.25 L 1459.85 571.75" stroke="#00c800" stroke-width="2.4" fill="none"/>
<rect x="1468.65" y="535.25" width="413.70" height="3" fill="#00f000"/>
<rect x="1468.65" y="570.25" width="413.70" height="3" fill="#00f000"/>
<path d="M 1468.65 536.75 L 1464.25 554.25 L 1468.65 571.75 M 1882.35 536.75 L 1886.75 554.25 L 1882.35 571.75" stroke="#00c800" stroke-width="2.4" fill="none"/>
<rect x="1891.15" y="535.25" width="8.70" height="3" fill="#00f000"/>
<rect x="1891.15" y="570.25" width="8.70" height="3" fill="#00f000"/>
<path d="M 1891.15 536.75 L 1886.75 554.25 L 1891.15 571.75 M 1899.85 536.75 L 1904.25 554.25 L 1899.85 571.75" stroke="#00c800" stroke-width="2.4" fill="none"/>
<rect x="1908.65" y="535.25" width="26.20" height="3" fill="#00f000"/>
<rect x="1908.65" y="570.25" width="26.20" height="3" fill="#00f000"/>
<path d="M 1908.65 536.75 L 1904.25 554.25 L 1908.65 571.75 M 1934.85 536.75 L 1939.25 554.25 L 1934.85 571.75" stroke="#00c800" stroke-width="2.4" fill="none"/>
<rect x="1943.65" y="535.25" width="46.20" height="3" fill="#00f000"/>
<rect x="1943.65" y="570.25" width="46.20" height="3" fill="#00f000"/>
<path d="M 1943.65 536.75 L 1939.25 554.25 L 1943.65 571.75 M 1989.85 536.75 L 1994.25 554.25 L 1989.85 571.75" stroke="#00c800" stroke-width="2.4" fill="none"/>
<rect x="1998.65" y="535.25" width="26.20" height="3" fill="#00f000"/>
<rect x="1998.65" y="570.25" width="26.20" height="3" fill="#00f000"/>
<path d="M 1998.65 536.75 L 1994.25 554.25 L 1998.65 571.75 M 2024.85 536.75 L 2029.25 554.25 L 2024.85 571.75" stroke="#00c800" stroke-width="2.4" fill="none"/>
<rect x="2033.65" y="535.25" width="43.70" height="3" fill="#00f000"/>
<rect x="2033.65" y="570.25" width="43.70" height="3" fill="#00f000"/>
<path d="M 2033.65 536.75 L 2029.25 554.25 L 2033.65 571.75 M 2077.35 536.75 L 2081.75 554.25 L 2077.35 571.75" stroke="#00c800" stroke-width="2.4" fill="none"/>
<rect x="2086.15" y="535.25" width="8.70" height="3" fill="#00f000"/>
<rect x="2086.15" y="570.25" width="8.70" height="3" fill="#00f000"/>
<path d="M 2086.15 536.75 L 2081.75 554.25 L 2086.15 571.75 M 2094.85 536.75 L 2099.25 554.25 L 2094.85 571.75" stroke="#00c800" stroke-width="2.4" fill="none"/>
<rect x="2103.65" y="535.25" width="8.70" height="3" fill="#00f000"/>
<rect x="2103.65" y="570.25" width="8.70" height="3" fill="#00f000"/>
<path d="M 2103.65 536.75 L 2099.25 554.25 L 2103.65 571.75 M 2112.35 536.75 L 2116.75 554.25 L 2112.35 571.75" stroke="#00c800" stroke-width="2.4" fill="none"/>
<rect x="2121.15" y="535.25" width="416.20" height="3" fill="#00f000"/>
<rect x="2121.15" y="570.25" width="416.20" height="3" fill="#00f000"/>
<path d="M 2121.15 536.75 L 2116.75 554.25 L 2121.15 571.75 M 2537.35 536.75 L 2541.75 554.25 L 2537.35 571.75" stroke="#00c800" stroke-width="2.4" fill="none"/>
<rect x="2546.15" y="535.25" width="8.70" height="3" fill="#00f000"/>
<rect x="2546.15" y="570.25" width="8.70" height="3" fill="#00f000"/>
<path d="M 2546.15 536.75 L 2541.75 554.25 L 2546.15 571.75 M 2554.85 536.75 L 2559.25 554.25 L 2554.85 571.75" stroke="#00c800" stroke-width="2.4" fill="none"/>
<rect x="2563.65" y="535.25" width="8.70" height="3" fill="#00f000"/>
<rect x="2563.65" y="570.25" width="8.70" height="3" fill="#00f000"/>
<path d="M 2563.65 536.75 L 2559.25 554.25 L 2563.65 571.75 M 2572.35 536.75 L 2576.75 554.25 L 2572.35 571.75" stroke="#00c800" stroke-width="2.4" fill="none"/>
<rect x="2581.15" y="535.25" width="43.70" height="3" fill="#00f000"/>
<rect x="2581.15" y="570.25" width="43.70" height="3" fill="#00f000"/>
<path d="M 2581.15 536.75 L 2576.75 554.25 L 2581.15 571.75 M 2624.85 536.75 L 2629.25 554.25 L 2624.85 571.75" stroke="#00c800" stroke-width="2.4" fill="none"/>
<rect x="2633.65" y="535.25" width="8.70" height="3" fill="#00f000"/>
<rect x="2633.65" y="570.25" width="8.70" height="3" fill="#00f000"/>
<path d="M 2633.65 536.75 L 2629.25 554.25 L 2633.65 571.75 M 2642.35 536.75 L 2646.75 554.25 L 2642.35 571.75" stroke="#00c800" stroke-width="2.4" fill="none"/>
<rect x="2651.15" y="535.25" width="8.70" height="3" fill="#00f000"/>
<rect x="2651.15" y="570.25" width="8.70" height="3" fill="#00f000"/>
<path d="M 2651.15 536.75 L 2646.75 554.25 L 2651.15 571.75 M 2659.85 536.75 L 2664.25 554.25 L 2659.85 571.75" stroke="#00c800" stroke-width="2.4" fill="none"/>
<rect x="2668.65" y="535.25" width="43.70" height="3" fill="#00f000"/>
<rect x="2668.65" y="570.25" width="43.70" height="3" fill="#00f000"/>
<path d="M 2668.65 536.75 L 2664.25 554.25 L 2668.65 571.75 M 2712.35 536.75 L 2716.75 554.25 L 2712.35 571.75" stroke="#00c800" stroke-width="2.4" fill="none"/>
<rect x="2721.15" y="535.25" width="8.70" height="3" fill="#00f000"/>
<rect x="2721.15" y="570.25" width="8.70" height="3" fill="#00f000"/>
<path d="M 2721.15 536.75 L 2716.75 554.25 L 2721.15 571.75 M 2729.85 536.75 L 2734.25 554.25 L 2729.85 571.75" stroke="#00c800" stroke-width="2.4" fill="none"/>
<rect x="2738.65" y="535.25" width="371.35" height="3" fill="#00f000"/>
<rect x="2738.65" y="570.25" width="371.35" height="3" fill="#00f000"/>
<path d="M 2738.65 536.75 L 2734.25 554.25 L 2738.65 571.75" stroke="#00c800" stroke-width="2.4" fill="none"/>
<rect x="833.00" y="635.25" width="6.85" height="3" fill="#00f000"/>
<rect x="833.00" y="670.25" width="6.85" height="3" fill="#00f000"/>
<path d="M 839.85 636.75 L 844.25 654.25 L 839.85 671.75" stroke="#00c800" stroke-width="2.4" fill="none"/>
<rect x="848.65" y="635.25" width="8.70" height="3" fill="#00f000"/>
<rect x="848.65" y="670.25" width="8.70" height="3" fill="#00f000"/>
<path d="M 848.65 636.75 L 844.25 654.25 L 848.65 671.75 M 857.35 636.75 L 861.75 654.25 L 857.35 671.75" stroke="#00c800" stroke-width="2.4" fill="none"/>
<rect x="866.15" y="635.25" width="486.20" height="3" fill="#00f000"/>
<rect x="866.15" y="670.25" width="486.20" height="3" fill="#00f000"/>
<path d="M 866.15 636.75 L 861.75 654.25 L 866.15 671.75 M 1352.35 636.75 L 1356.75 654.25 L 1352.35 671.75" stroke="#00c800" stroke-width="2.4" fill="none"/>
<rect x="1361.15" y="635.25" width="8.70" height="3" fill="#00f000"/>
<rect x="1361.15" y="670.25" width="8.70" height="3" fill="#00f000"/>
<path d="M 1361.15 636.75 L 1356.75 654.25 L 1361.15 671.75 M 1369.85 636.75 L 1374.25 654.25 L 1369.85 671.75" stroke="#00c800" stroke-width="2.4" fill="none"/>
<rect x="1378.65" y="635.25" width="8.70" height="3" fill="#00f000"/>
<rect x="1378.65" y="670.25" width="8.70" height="3" fill="#00f000"/>
<path d="M 1378.65 636.75 L 1374.25 654.25 L 1378.65 671.75 M 1387.35 636.75 L 1391.75 654.25 L 1387.35 671.75" stroke="#00c800" stroke-width="2.4" fill="none"/>
<rect x="1396.15" y="635.25" width="43.70" height="3" fill="#00f000"/>
<rect x="1396.15" y="670.25" width="43.70" height="3" fill="#00f000"/>
<path d="M 1396.15 636.75 L 1391.75 654.25 L 1396.15 671.75 M 1439.85 636.75 L 1444.25 654.25 L 1439.85 671.75" stroke="#00c800" stroke-width="2.4" fill="none"/>
<rect x="1448.65" y="635.25" width="416.20" height="3" fill="#00f000"/>
<rect x="1448.65" y="670.25" width="416.20" height="3" fill="#00f000"/>
<path d="M 1448.65 636.75 L 1444.25 654.25 L 1448.65 671.75 M 1864.85 636.75 L 1869.25 654.25 L 1864.85 671.75" stroke="#00c800" stroke-width="2.4" fill="none"/>
<rect x="1873.65" y="635.25" width="8.70" height="3" fill="#00f000"/>
<rect x="1873.65" y="670.25" width="8.70" height="3" fill="#00f000"/>
<path d="M 1873.65 636.75 L 1869.25 654.25 L 1873.65 671.75 M 1882.35 636.75 L 1886.75 654.25 L 1882.35 671.75" stroke="#00c800" stroke-width="2.4" fill="none"/>
<rect x="1891.15" y="635.25" width="8.70" height="3" fill="#00f000"/>
<rect x="1891.15" y="670.25" width="8.70" height="3" fill="#00f000"/>
<path d="M 1891.15 636.75 L 1886.75 654.25 L 1891.15 671.75 M 1899.85 636.75 L 1904.25 654.25 L 1899.85 671.75" stroke="#00c800" stroke-width="2.4" fill="none"/>
<rect x="1908.65" y="635.25" width="26.20" height="3" fill="#00f000"/>
<rect x="1908.65" y="670.25" width="26.20" height="3" fill="#00f000"/>
<path d="M 1908.65 636.75 L 1904.25 654.25 L 1908.65 671.75 M 1934.85 636.75 L 1939.25 654.25 L 1934.85 671.75" stroke="#00c800" stroke-width="2.4" fill="none"/>
<rect x="1943.65" y="635.25" width="46.20" height="3" fill="#00f000"/>
<rect x="1943.65" y="670.25" width="46.20" height="3" fill="#00f000"/>
<path d="M 1943.65 636.75 L 1939.25 654.25 L 1943.65 671.75 M 1989.85 636.75 L 1994.25 654.25 L 1989.85 671.75" stroke="#00c800" stroke-width="2.4" fill="none"/>
<rect x="1998.65" y="635.25" width="26.20" height="3" fill="#00f000"/>
<rect x="1998.65" y="670.25" width="26.20" height="3" fill="#00f000"/>
<path d="M 1998.65 636.75 L 1994.25 654.25 L 1998.65 671.75 M 2024.85 636.75 L 2029.25 654.25 L 2024.85 671.75" stroke="#00c800" stroke-width="2.4" fill="none"/>
<rect x="2033.65" y="635.25" width="43.70" height="3" fill="#00f000"/>
<rect x="2033.65" y="670.25" width="43.70" height="3" fill="#00f000"/>
<path d="M 2033.65 636.75 L 2029.25 654.25 L 2033.65 671.75 M 2077.35 636.75 L 2081.75 654.25 L 2077.35 671.75" stroke="#00c800" stroke-width="2.4" fill="none"/>
<rect x="2086.15" y="635.25" width="8.70" height="3" fill="#00f000"/>
<rect x="2086.15" y="670.25" width="8.70" height="3" fill="#00f000"/>
<path d="M 2086.15 636.75 L 2081.75 654.25 L 2086.15 671.75 M 2094.85 636.75 L 2099.25 654.25 L 2094.85 671.75" stroke="#00c800" stroke-width="2.4" fill="none"/>
<rect x="2103.65" y="635.25" width="416.20" height="3" fill="#00f000"/>
<rect x="2103.65" y="670.25" width="416.20" height="3" fill="#00f000"/>
<path d="M 2103.65 636.75 L 2099.25 654.25 L 2103.65 671.75 M 2519.85 636.75 L 2524.25 654.25 L 2519.85 671.75" stroke="#00c800" stroke-width="2.4" fill="none"/>
<rect x="2528.65" y="635.25" width="8.70" height="3" fill="#00f000"/>
<rect x="2528.65" y="670.25" width="8.70" height="3" fill="#00f000"/>
<path d="M 2528.65 636.75 L 2524.25 654.25 L 2528.65 671.75 M 2537.35 636.75 L 2541.75 654.25 L 2537.35 671.75" stroke="#00c800" stroke-width="2.4" fill="none"/>
<rect x="2546.15" y="635.25" width="8.70" height="3" fill="#00f000"/>
<rect x="2546.15" y="670.25" width="8.70" height="3" fill="#00f000"/>
<path d="M 2546.15 636.75 L 2541.75 654.25 L 2546.15 671.75 M 2554.85 636.75 L 2559.25 654.25 L 2554.85 671.75" stroke="#00c800" stroke-width="2.4" fill="none"/>
<rect x="2563.65" y="635.25" width="8.70" height="3" fill="#00f000"/>
<rect x="2563.65" y="670.25" width="8.70" height="3" fill="#00f000"/>
<path d="M 2563.65 636.75 L 2559.25 654.25 L 2563.65 671.75 M 2572.35 636.75 L 2576.75 654.25 L 2572.35 671.75" stroke="#00c800" stroke-width="2.4" fill="none"/>
<rect x="2581.15" y="635.25" width="43.70" height="3" fill="#00f000"/>
<rect x="2581.15" y="670.25" width="43.70" height="3" fill="#00f000"/>
<path d="M 2581.15 636.75 L 2576.75 654.25 L 2581.15 671.75 M 2624.85 636.75 L 2629.25 654.25 L 2624.85 671.75" stroke="#00c800" stroke-width="2.4" fill="none"/>
<rect x="2633.65" y="635.25" width="8.70" height="3" fill="#00f000"/>
<rect x="2633.65" y="670.25" width="8.70" height="3" fill="#00f000"/>
<path d="M 2633.65 636.75 L 2629.25 654.25 L 2633.65 671.75 M 2642.35 636.75 L 2646.75 654.25 L 2642.35 671.75" stroke="#00c800" stroke-width="2.4" fill="none"/>
<rect x="2651.15" y="635.25" width="8.70" height="3" fill="#00f000"/>
<rect x="2651.15" y="670.25" width="8.70" height="3" fill="#00f000"/>
<path d="M 2651.15 636.75 L 2646.75 654.25 L 2651.15 671.75 M 2659.85 636.75 L 2664.25 654.25 L 2659.85 671.75" stroke="#00c800" stroke-width="2.4" fill="none"/>
<rect x="2668.65" y="635.25" width="43.70" height="3" fill="#00f000"/>
<rect x="2668.65" y="670.25" width="43.70" height="3" fill="#00f000"/>
<path d="M 2668.65 636.75 L 2664.25 654.25 L 2668.65 671.75 M 2712.35 636.75 L 2716.75 654.25 L 2712.35 671.75" stroke="#00c800" stroke-width="2.4" fill="none"/>
<rect x="2721.15" y="635.25" width="388.85" height="3" fill="#00f000"/>
<rect x="2721.15" y="670.25" width="388.85" height="3" fill="#00f000"/>
<path d="M 2721.15 636.75 L 2716.75 654.25 L 2721.15 671.75" stroke="#00c800" stroke-width="2.4" fill="none"/>
<rect x="833.00" y="984.55" width="2277.00" height="5.4" fill="#00f000"/>
<rect x="833.00" y="1020.25" width="2277.00" height="3" fill="#00f000"/>
<rect x="833.00" y="1034.55" width="2277.00" height="5.4" fill="#00f000"/>
<rect x="833.00" y="1070.25" width="2277.00" height="3" fill="#00f000"/>
<rect x="833.00" y="1085.25" width="2277.00" height="3" fill="#00f000"/>
<rect x="833.00" y="1120.25" width="2277.00" height="3" fill="#00f000"/>
<rect x="833.00" y="1135.25" width="2277.00" height="3" fill="#00f000"/>
<rect x="833.00" y="1170.25" width="2277.00" height="3" fill="#00f000"/>
<rect x="833.00" y="1335.25" width="714.35" height="3" fill="#00f000"/>
<rect x="833.00" y="1370.25" width="714.35" height="3" fill="#00f000"/>
<path d="M 1547.35 1336.75 L 1551.75 1354.25 L 1547.35 1371.75" stroke="#00c800" stroke-width="2.4" fill="none"/>
<rect x="1556.15" y="1335.25" width="78.70" height="3" fill="#00f000"/>
<rect x="1556.15" y="1370.25" width="78.70" height="3" fill="#00f000"/>
<path d="M 1556.15 1336.75 L 1551.75 1354.25 L 1556.15 1371.75 M 1634.85 1336.75 L 1639.25 1354.25 L 1634.85 1371.75" stroke="#00c800" stroke-width="2.4" fill="none"/>
<rect x="1643.65" y="1335.25" width="451.20" height="3" fill="#00f000"/>
<rect x="1643.65" y="1370.25" width="451.20" height="3" fill="#00f000"/>
<path d="M 1643.65 1336.75 L 1639.25 1354.25 L 1643.65 1371.75 M 2094.85 1336.75 L 2099.25 1354.25 L 2094.85 1371.75" stroke="#00c800" stroke-width="2.4" fill="none"/>
<rect x="2103.65" y="1335.25" width="168.70" height="3" fill="#00f000"/>
<rect x="2103.65" y="1370.25" width="168.70" height="3" fill="#00f000"/>
<path d="M 2103.65 1336.75 L 2099.25 1354.25 L 2103.65 1371.75 M 2272.35 1336.75 L 2276.75 1354.25 L 2272.35 1371.75" stroke="#00c800" stroke-width="2.4" fill="none"/>
<rect x="2281.15" y="1335.25" width="448.70" height="3" fill="#00f000"/>
<rect x="2281.15" y="1370.25" width="448.70" height="3" fill="#00f000"/>
<path d="M 2281.15 1336.75 L 2276.75 1354.25 L 2281.15 1371.75 M 2729.85 1336.75 L 2734.25 1354.25 L 2729.85 1371.75" stroke="#00c800" stroke-width="2.4" fill="none"/>
<rect x="2738.65" y="1335.25" width="81.20" height="3" fill="#00f000"/>
<rect x="2738.65" y="1370.25" width="81.20" height="3" fill="#00f000"/>
<path d="M 2738.65 1336.75 L 2734.25 1354.25 L 2738.65 1371.75 M 2819.85 1336.75 L 2824.25 1354.25 L 2819.85 1371.75" stroke="#00c800" stroke-width="2.4" fill="none"/>
<rect x="2828.65" y="1335.25" width="281.35" height="3" fill="#00f000"/>
<rect x="2828.65" y="1370.25" width="281.35" height="3" fill="#00f000"/>
<path d="M 2828.65 1336.75 L 2824.25 1354.25 L 2828.65 1371.75" stroke="#00c800" stroke-width="2.4" fill="none"/>
<rect x="833.00" y="1385.25" width="731.85" height="3" fill="#e60000"/>
<rect x="833.00" y="1420.25" width="731.85" height="3" fill="#e60000"/>
<path d="M 1564.85 1386.75 L 1569.25 1404.25 L 1564.85 1421.75" stroke="#e60000" stroke-width="2.4" fill="none"/>
<rect x="1573.65" y="1385.25" width="8.70" height="3" fill="#00f000"/>
<rect x="1573.65" y="1420.25" width="8.70" height="3" fill="#00f000"/>
<path d="M 1573.65 1386.75 L 1569.25 1404.25 L 1573.65 1421.75 M 1582.35 1386.75 L 1586.75 1404.25 L 1582.35 1421.75" stroke="#00c800" stroke-width="2.4" fill="none"/>
<rect x="1591.15" y="1385.25" width="61.20" height="3" fill="#e60000"/>
<rect x="1591.15" y="1420.25" width="61.20" height="3" fill="#e60000"/>
<path d="M 1591.15 1386.75 L 1586.75 1404.25 L 1591.15 1421.75 M 1652.35 1386.75 L 1656.75 1404.25 L 1652.35 1421.75" stroke="#e60000" stroke-width="2.4" fill="none"/>
<rect x="1661.15" y="1385.25" width="8.70" height="3" fill="#00f000"/>
<rect x="1661.15" y="1420.25" width="8.70" height="3" fill="#00f000"/>
<path d="M 1661.15 1386.75 L 1656.75 1404.25 L 1661.15 1421.75 M 1669.85 1386.75 L 1674.25 1404.25 L 1669.85 1421.75" stroke="#00c800" stroke-width="2.4" fill="none"/>
<rect x="1678.65" y="1385.25" width="433.70" height="3" fill="#e60000"/>
<rect x="1678.65" y="1420.25" width="433.70" height="3" fill="#e60000"/>
<path d="M 1678.65 1386.75 L 1674.25 1404.25 L 1678.65 1421.75 M 2112.35 1386.75 L 2116.75 1404.25 L 2112.35 1421.75" stroke="#e60000" stroke-width="2.4" fill="none"/>
<rect x="2121.15" y="1385.25" width="8.70" height="3" fill="#00f000"/>
<rect x="2121.15" y="1420.25" width="8.70" height="3" fill="#00f000"/>
<path d="M 2121.15 1386.75 L 2116.75 1404.25 L 2121.15 1421.75 M 2129.85 1386.75 L 2134.25 1404.25 L 2129.85 1421.75" stroke="#00c800" stroke-width="2.4" fill="none"/>
<rect x="2138.65" y="1385.25" width="61.20" height="3" fill="#e60000"/>
<rect x="2138.65" y="1420.25" width="61.20" height="3" fill="#e60000"/>
<path d="M 2138.65 1386.75 L 2134.25 1404.25 L 2138.65 1421.75 M 2199.85 1386.75 L 2204.25 1404.25 L 2199.85 1421.75" stroke="#e60000" stroke-width="2.4" fill="none"/>
<rect x="2208.65" y="1385.25" width="8.70" height="3" fill="#00f000"/>
<rect x="2208.65" y="1420.25" width="8.70" height="3" fill="#00f000"/>
<path d="M 2208.65 1386.75 L 2204.25 1404.25 L 2208.65 1421.75 M 2217.35 1386.75 L 2221.75 1404.25 L 2217.35 1421.75" stroke="#00c800" stroke-width="2.4" fill="none"/>
<rect x="2226.15" y="1385.25" width="63.70" height="3" fill="#e60000"/>
<rect x="2226.15" y="1420.25" width="63.70" height="3" fill="#e60000"/>
<path d="M 2226.15 1386.75 L 2221.75 1404.25 L 2226.15 1421.75 M 2289.85 1386.75 L 2294.25 1404.25 L 2289.85 1421.75" stroke="#e60000" stroke-width="2.4" fill="none"/>
<rect x="2298.65" y="1385.25" width="8.70" height="3" fill="#00f000"/>
<rect x="2298.65" y="1420.25" width="8.70" height="3" fill="#00f000"/>
<path d="M 2298.65 1386.75 L 2294.25 1404.25 L 2298.65 1421.75 M 2307.35 1386.75 L 2311.75 1404.25 L 2307.35 1421.75" stroke="#00c800" stroke-width="2.4" fill="none"/>
<rect x="2316.15" y="1385.25" width="431.20" height="3" fill="#e60000"/>
<rect x="2316.15" y="1420.25" width="431.20" height="3" fill="#e60000"/>
<path d="M 2316.15 1386.75 L 2311.75 1404.25 L 2316.15 1421.75 M 2747.35 1386.75 L 2751.75 1404.25 L 2747.35 1421.75" stroke="#e60000" stroke-width="2.4" fill="none"/>
<rect x="2756.15" y="1385.25" width="8.70" height="3" fill="#00f000"/>
<rect x="2756.15" y="1420.25" width="8.70" height="3" fill="#00f000"/>
<path d="M 2756.15 1386.75 L 2751.75 1404.25 L 2756.15 1421.75 M 2764.85 1386.75 L 2769.25 1404.25 L 2764.85 1421.75" stroke="#00c800" stroke-width="2.4" fill="none"/>
<rect x="2773.65" y="1385.25" width="63.70" height="3" fill="#e60000"/>
<rect x="2773.65" y="1420.25" width="63.70" height="3" fill="#e60000"/>
<path d="M 2773.65 1386.75 L 2769.25 1404.25 L 2773.65 1421.75 M 2837.35 1386.75 L 2841.75 1404.25 L 2837.35 1421.75" stroke="#e60000" stroke-width="2.4" fill="none"/>
<rect x="2846.15" y="1385.25" width="8.70" height="3" fill="#00f000"/>
<rect x="2846.15" y="1420.25" width="8.70" height="3" fill="#00f000"/>
<path d="M 2846.15 1386.75 L 2841.75 1404.25 L 2846.15 1421.75 M 2854.85 1386.75 L 2859.25 1404.25 L 2854.85 1421.75" stroke="#00c800" stroke-width="2.4" fill="none"/>
<rect x="2863.65" y="1385.25" width="246.35" height="3" fill="#e60000"/>
<rect x="2863.65" y="1420.25" width="246.35" height="3" fill="#e60000"/>
<path d="M 2863.65 1386.75 L 2859.25 1404.25 L 2863.65 1421.75" stroke="#e60000" stroke-width="2.4" fill="none"/>
<rect x="833.00" y="1635.25" width="731.85" height="3" fill="#e60000"/>
<rect x="833.00" y="1670.25" width="731.85" height="3" fill="#e60000"/>
<path d="M 1564.85 1636.75 L 1569.25 1654.25 L 1564.85 1671.75" stroke="#e60000" stroke-width="2.4" fill="none"/>
<rect x="1573.65" y="1635.25" width="8.70" height="3" fill="#00f000"/>
<rect x="1573.65" y="1670.25" width="8.70" height="3" fill="#00f000"/>
<path d="M 1573.65 1636.75 L 1569.25 1654.25 L 1573.65 1671.75 M 1582.35 1636.75 L 1586.75 1654.25 L 1582.35 1671.75" stroke="#00c800" stroke-width="2.4" fill="none"/>
<rect x="1591.15" y="1635.25" width="61.20" height="3" fill="#e60000"/>
<rect x="1591.15" y="1670.25" width="61.20" height="3" fill="#e60000"/>
<path d="M 1591.15 1636.75 L 1586.75 1654.25 L 1591.15 1671.75 M 1652.35 1636.75 L 1656.75 1654.25 L 1652.35 1671.75" stroke="#e60000" stroke-width="2.4" fill="none"/>
<rect x="1661.15" y="1635.25" width="8.70" height="3" fill="#00f000"/>
<rect x="1661.15" y="1670.25" width="8.70" height="3" fill="#00f000"/>
<path d="M 1661.15 1636.75 L 1656.75 1654.25 L 1661.15 1671.75 M 1669.85 1636.75 L 1674.25 1654.25 L 1669.85 1671.75" stroke="#00c800" stroke-width="2.4" fill="none"/>
<rect x="1678.65" y="1635.25" width="433.70" height="3" fill="#e60000"/>
<rect x="1678.65" y="1670.25" width="433.70" height="3" fill="#e60000"/>
<path d="M 1678.65 1636.75 L 1674.25 1654.25 L 1678.65 1671.75 M 2112.35 1636.75 L 2116.75 1654.25 L 2112.35 1671.75" stroke="#e60000" stroke-width="2.4" fill="none"/>
<rect x="2121.15" y="1635.25" width="8.70" height="3" fill="#00f000"/>
<rect x="2121.15" y="1670.25" width="8.70" height="3" fill="#00f000"/>
<path d="M 2121.15 1636.75 L 2116.75 1654.25 L 2121.15 1671.75 M 2129.85 1636.75 L 2134.25 1654.25 L 2129.85 1671.75" stroke="#00c800" stroke-width="2.4" fill="none"/>
<rect x="2138.65" y="1635.25" width="61.20" height="3" fill="#e60000"/>
<rect x="2138.65" y="1670.25" width="61.20" height="3" fill="#e60000"/>
<path d="M 2138.65 1636.75 L 2134.25 1654.25 L 2138.65 1671.75 M 2199.85 1636.75 L 2204.25 1654.25 L 2199.85 1671.75" stroke="#e60000" stroke-width="2.4" fill="none"/>
<rect x="2208.65" y="1635.25" width="8.70" height="3" fill="#00f000"/>
<rect x="2208.65" y="1670.25" width="8.70" height="3" fill="#00f000"/>
<path d="M 2208.65 1636.75 L 2204.25 1654.25 L 2208.65 1671.75 M 2217.35 1636.75 L 2221.75 1654.25 L 2217.35 1671.75" stroke="#00c800" stroke-width="2.4" fill="none"/>
<rect x="2226.15" y="1635.25" width="63.70" height="3" fill="#e60000"/>
<rect x="2226.15" y="1670.25" width="63.70" height="3" fill="#e60000"/>
<path d="M 2226.15 1636.75 L 2221.75 1654.25 L 2226.15 1671.75 M 2289.85 1636.75 L 2294.25 1654.25 L 2289.85 1671.75" stroke="#e60000" stroke-width="2.4" fill="none"/>
<rect x="2298.65" y="1635.25" width="8.70" height="3" fill="#00f000"/>
<rect x="2298.65" y="1670.25" width="8.70" height="3" fill="#00f000"/>
<path d="M 2298.65 1636.75 L 2294.25 1654.25 L 2298.65 1671.75 M 2307.35 1636.75 L 2311.75 1654.25 L 2307.35 1671.75" stroke="#00c800" stroke-width="2.4" fill="none"/>
<rect x="2316.15" y="1635.25" width="431.20" height="3" fill="#e60000"/>
<rect x="2316.15" y="1670.25" width="431.20" height="3" fill="#e60000"/>
<path d="M 2316.15 1636.75 L 2311.75 1654.25 L 2316.15 1671.75 M 2747.35 1636.75 L 2751.75 1654.25 L 2747.35 1671.75" stroke="#e60000" stroke-width="2.4" fill="none"/>
<rect x="2756.15" y="1635.25" width="8.70" height="3" fill="#00f000"/>
<rect x="2756.15" y="1670.25" width="8.70" height="3" fill="#00f000"/>
<path d="M 2756.15 1636.75 L 2751.75 1654.25 L 2756.15 1671.75 M 2764.85 1636.75 L 2769.25 1654.25 L 2764.85 1671.75" stroke="#00c800" stroke-width="2.4" fill="none"/>
<rect x="2773.65" y="1635.25" width="63.70" height="3" fill="#e60000"/>
<rect x="2773.65" y="1670.25" width="63.70" height="3" fill="#e60000"/>
<path d="M 2773.65 1636.75 L 2769.25 1654.25 L 2773.65 1671.75 M 2837.35 1636.75 L 2841.75 1654.25 L 2837.35 1671.75" stroke="#e60000" stroke-width="2.4" fill="none"/>
<rect x="2846.15" y="1635.25" width="8.70" height="3" fill="#00f000"/>
<rect x="2846.15" y="1670.25" width="8.70" height="3" fill="#00f000"/>
<path d="M 2846.15 1636.75 L 2841.75 1654.25 L 2846.15 1671.75 M 2854.85 1636.75 L 2859.25 1654.25 L 2854.85 1671.75" stroke="#00c800" stroke-width="2.4" fill="none"/>
<rect x="2863.65" y="1635.25" width="246.35" height="3" fill="#e60000"/>
<rect x="2863.65" y="1670.25" width="246.35" height="3" fill="#e60000"/>
<path d="M 2863.65 1636.75 L 2859.25 1654.25 L 2863.65 1671.75" stroke="#e60000" stroke-width="2.4" fill="none"/>
<rect x="833.00" y="1685.25" width="2277.00" height="3" fill="#e60000"/>
<rect x="833.00" y="1720.25" width="2277.00" height="3" fill="#e60000"/>
<g font-family="Liberation Mono, monospace" font-size="29.17" fill="#ffffff">
<text transform="translate(866.25,168.30) scale(1,0.885)">8OOOOO1O</text>
<text transform="translate(1396.25,168.30) scale(1,0.885)">8+</text>
<text transform="translate(1448.75,168.30) scale(1,0.885)">8OOOOO2O</text>
<text transform="translate(1908.75,168.30) scale(1,0.885)">+</text>
<text transform="translate(1943.75,168.30) scale(1,0.885)">8+</text>
<text transform="translate(1998.75,168.30) scale(1,0.885)">+</text>
<text transform="translate(2033.75,168.30) scale(1,0.885)">8+</text>
<text transform="translate(2103.75,168.30) scale(1,0.885)">8OOOOO4O</text>
<text transform="translate(2581.25,168.30) scale(1,0.885)">8+</text>
<text transform="translate(2668.75,168.30) scale(1,0.885)">8+</text>
<text transform="translate(2721.25,168.30) scale(1,0.885)">8OOOOO6O</text>
<text transform="translate(866.25,368.30) scale(1,0.885)">8OOOOO1O</text>
<text transform="translate(1396.25,368.30) scale(1,0.885)">8+</text>
<text transform="translate(1448.75,368.30) scale(1,0.885)">8OOOOO2O</text>
<text transform="translate(1906.25,368.30) scale(1,0.885)">+</text>
<text transform="translate(1943.75,368.30) scale(1,0.885)">8+</text>
<text transform="translate(1996.25,368.30) scale(1,0.885)">+</text>
<text transform="translate(2031.25,368.30) scale(1,0.885)">8+</text>
<text transform="translate(2101.25,368.30) scale(1,0.885)">8OOOOO4O</text>
<text transform="translate(2578.75,368.30) scale(1,0.885)">8+</text>
<text transform="translate(2666.25,368.30) scale(1,0.885)">8+</text>
<text transform="translate(2721.25,368.30) scale(1,0.885)">8OOOOO6O</text>
<text transform="translate(835.50,218.30) scale(1,0.885)">OOO</text>
<text transform="translate(835.50,268.30) scale(1,0.885)">OOOO1OO8</text>
<text transform="translate(835.50,318.30) scale(1,0.885)">8OOOOOOO</text>
<text transform="translate(835.50,418.30) scale(1,0.885)">FFFFFFFFFFFFFFFFFFFFFFFFFFFFFFFFFFFFFFFFFFFFFFFFFFFFFFFFFFFFFFFFFFFFFFFFFFFFFFFFFFFFFFFFFFFFFFFFFFFFFFFFFFFFFFFFFFFFFFFFFFFFFFFF</text>
<text transform="translate(866.25,568.30) scale(1,0.885)">2OOOOOO23EA8OOOOOO8O68OO69+</text>
<text transform="translate(1396.25,568.30) scale(1,0.885)">2+</text>
<text transform="translate(1468.75,568.30) scale(1,0.885)">2OOOOOO73EA8OOOOO1COOC+</text>
<text transform="translate(1908.75,568.30) scale(1,0.885)">+</text>
<text transform="translate(1943.75,568.30) scale(1,0.885)">2+</text>
<text transform="translate(1998.75,568.30) scale(1,0.885)">+</text>
<text transform="translate(2033.75,568.30) scale(1,0.885)">2+</text>
<text transform="translate(2121.25,568.30) scale(1,0.885)">2OOOOOOF3EA8OOOOO3CO98+</text>
<text transform="translate(2581.25,568.30) scale(1,0.885)">2+</text>
<text transform="translate(2668.75,568.30) scale(1,0.885)">2+</text>
<text transform="translate(2738.75,568.30) scale(1,0.885)">2OOOOO173EA8OOOOO5CO+</text>
<text transform="translate(866.25,668.30) scale(1,0.885)">2OOOOOO33EA8OOOOOOCO65OO61+</text>
<text transform="translate(1396.25,668.30) scale(1,0.885)">2+</text>
<text transform="translate(1448.75,668.30) scale(1,0.885)">2OOOOOO73EA8OOOOO1COOC+</text>
<text transform="translate(1908.75,668.30) scale(1,0.885)">+</text>
<text transform="translate(1943.75,668.30) scale(1,0.885)">2+</text>
<text transform="translate(1998.75,668.30) scale(1,0.885)">+</text>
<text transform="translate(2033.75,668.30) scale(1,0.885)">2+</text>
<text transform="translate(2103.75,668.30) scale(1,0.885)">2OOOOOOF3EA8OOOOO3CO98+</text>
<text transform="translate(2581.25,668.30) scale(1,0.885)">2+</text>
<text transform="translate(2668.75,668.30) scale(1,0.885)">2+</text>
<text transform="translate(2721.25,668.30) scale(1,0.885)">2OOOOO173EA8OOOOO5COO+</text>
<text transform="translate(835.50,1018.30) scale(1,0.885)">11</text>
<text transform="translate(835.50,1068.30) scale(1,0.885)">11</text>
<text transform="translate(835.50,1118.30) scale(1,0.885)">AAAAAAAA</text>
<text transform="translate(835.50,1168.30) scale(1,0.885)">AAAAAAAA</text>
<text transform="translate(835.50,1368.30) scale(1,0.885)">AA</text>
<text transform="translate(1556.25,1368.30) scale(1,0.885)">68</text>
<text transform="translate(1643.75,1368.30) scale(1,0.885)">65</text>
<text transform="translate(2103.75,1368.30) scale(1,0.885)">6C</text>
<text transform="translate(2281.25,1368.30) scale(1,0.885)">6F</text>
<text transform="translate(2738.75,1368.30) scale(1,0.885)">21</text>
<text transform="translate(2828.75,1368.30) scale(1,0.885)">OA</text>
<text transform="translate(835.50,1418.30) scale(1,0.885)">xx</text>
<text transform="translate(1591.25,1418.30) scale(1,0.885)">xx</text>
<text transform="translate(1678.75,1418.30) scale(1,0.885)">xx</text>
<text transform="translate(2138.75,1418.30) scale(1,0.885)">xx</text>
<text transform="translate(2226.25,1418.30) scale(1,0.885)">xx</text>
<text transform="translate(2316.25,1418.30) scale(1,0.885)">xx</text>
<text transform="translate(2773.75,1418.30) scale(1,0.885)">xx</text>
<text transform="translate(2863.75,1418.30) scale(1,0.885)">xx</text>
<text transform="translate(835.50,1668.30) scale(1,0.885)">xx</text>
<text transform="translate(1591.25,1668.30) scale(1,0.885)">xx</text>
<text transform="translate(1678.75,1668.30) scale(1,0.885)">xx</text>
<text transform="translate(2138.75,1668.30) scale(1,0.885)">xx</text>
<text transform="translate(2226.25,1668.30) scale(1,0.885)">xx</text>
<text transform="translate(2316.25,1668.30) scale(1,0.885)">xx</text>
<text transform="translate(2773.75,1668.30) scale(1,0.885)">xx</text>
<text transform="translate(2863.75,1668.30) scale(1,0.885)">xx</text>
<text transform="translate(835.50,1718.30) scale(1,0.885)">xx</text>
</g>
<rect x="860.2" y="78.4" width="3" height="1660" fill="#e87878"/>
</g>
</svg>
</body></html>
